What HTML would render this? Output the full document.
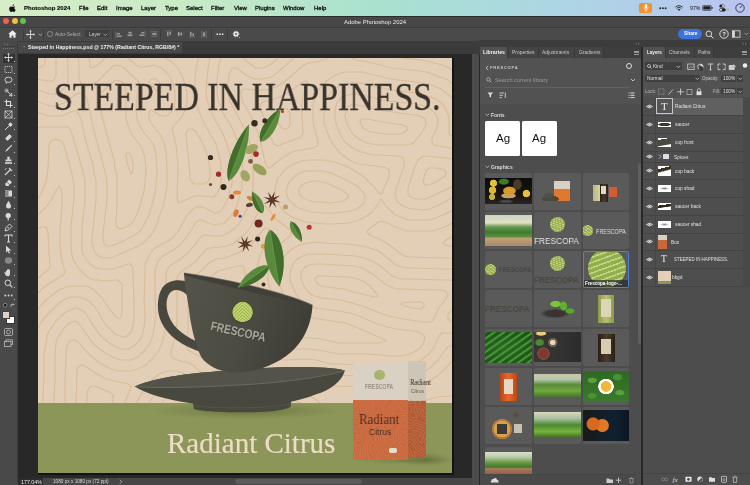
<!DOCTYPE html>
<html><head><meta charset="utf-8">
<style>
*{margin:0;padding:0;box-sizing:border-box}
html,body{width:750px;height:485px;overflow:hidden;background:#282828;font-family:"Liberation Sans",sans-serif}
.a{position:absolute}
.t{position:absolute;white-space:nowrap;line-height:1;will-change:transform}
#menubar{left:0;top:0;width:750px;height:16px;background:linear-gradient(90deg,#d6edc6 0%,#c8ebc6 25%,#a9e1cf 50%,#acd6e4 75%,#bac4f1 100%)}
#menubar .t{font-size:6px;color:#111;top:5.2px;-webkit-text-stroke:0.3px #111}
#titlebar{left:0;top:16px;width:750px;height:10.5px;background:#474747;border-top:0.6px solid #2c2c2c}
#opts{left:0;top:26.5px;width:750px;height:14px;background:#4a4a4a;border-top:0.8px solid #3a3a3a}
#tools{left:0;top:41px;width:17.5px;height:444px;background:#494949}
#tabbar{left:17.5px;top:41px;width:462px;height:12.5px;background:#3b3b3b}
#doctab{left:17.7px;top:41.8px;width:164.4px;height:11.2px;background:#484848}
#canvasbg{left:17.5px;top:53.5px;width:454px;height:424px;background:#282828}
#canvas{left:37.5px;top:57.5px;width:414.5px;height:415px;background:#e3cfb8;overflow:hidden;box-shadow:1px 1px 0 1px #131313}
#vscroll{left:471.5px;top:53.5px;width:7.5px;height:431.5px;background:#4b4b4b}
#status{left:17.5px;top:477.5px;width:454px;height:7.5px;background:#444}
#libpanel{left:480px;top:46.5px;width:161px;height:438.5px;background:#4d4d4d}
#layerpanel{left:643px;top:46.5px;width:107px;height:438.5px;background:#4d4d4d}
#rightstrip{left:479px;top:40px;width:271px;height:6.5px;background:#3c3c3c}
.sep{position:absolute;background:#3a3a3a}
.cell{position:absolute;width:46.6px;height:37px;background:#5a5a5a;border-radius:1.6px;overflow:hidden}
.cell>div{position:absolute}
</style></head><body>
<div id="menubar" class="a">
  <div class="t" style="left:8.5px;top:3.5px;font-size:9px"></div>
  <div class="t" style="left:23.7px;font-weight:bold;font-size:6px;color:#000;-webkit-text-stroke:0.1px #000">Photoshop 2024</div>
  <div class="t" style="left:78.7px">File</div>
  <div class="t" style="left:96.6px">Edit</div>
  <div class="t" style="left:116px">Image</div>
  <div class="t" style="left:141px">Layer</div>
  <div class="t" style="left:164.5px">Type</div>
  <div class="t" style="left:186.2px">Select</div>
  <div class="t" style="left:211.2px">Filter</div>
  <div class="t" style="left:234px">View</div>
  <div class="t" style="left:255.2px">Plugins</div>
  <div class="t" style="left:283.2px">Window</div>
  <div class="t" style="left:313.5px">Help</div>
</div>
<div id="titlebar" class="a"></div>
<div id="opts" class="a"></div>
<div id="tools" class="a"></div>
<div id="tabbar" class="a"></div>
<div id="doctab" class="a"></div>
<div id="canvasbg" class="a"></div>
<div id="canvas" class="a">
  <svg class="a" style="left:0;top:0" width="415" height="415" viewBox="0 0 415 415"><path d="M-30 231 -28 231 -25 228 -13 217 -3 208 -2 206 -1 204 -0 200 -0 195 -1 191 -2 189 -3 187 -4 187 -6 186 -8 186 -21 189 -30 189M-30 250 -28 249 -26 248 -16 235 -7 226 -1 221 10 212 12 209 12 206 11 193 10 175 9 171 8 169 6 169 4 169 -9 174 -17 177 -23 178 -30 178M-30 321 -29 318 -29 316 -28 295 -28 290 -26 279 -24 273 -22 267 -18 257 -15 252 -11 247 -5 240 1 234 6 229 12 225 25 217 26 216 27 214 27 212 26 210 24 202 23 198 22 190 22 171 24 150 24 141 24 135 23 130 22 129 21 129 20 130 18 133 13 142 9 148 3 154 -2 158 -8 162 -16 165 -23 167 -30 167M444 310 430 310 427 310 424 311 421 313 418 316 416 319 415 322 415 324 416 325 420 326 427 326 444 326M349 351 352 350 354 348 355 346 355 345 354 344 352 343 350 343 340 342 331 343 330 343 329 344 333 346 343 350 347 351 349 351M84 -30 87 -28 106 -17 110 -16 119 -15 125 -14 132 -11 143 -4 146 -3 147 -3 148 -4 149 -5 151 -8 156 -25 157 -30M166 126 168 125 170 124 171 122 172 119 172 115 172 111 171 105 170 99 168 93 166 88 164 84 161 79 158 74 156 72 154 71 152 71 150 72 149 73 148 75 148 77 150 95 151 106 152 118 152 121 154 124 155 125 156 126 160 126 166 126M-30 348 -24 348 -21 347 -19 346 -18 344 -17 339 -16 318 -15 292 -14 281 -13 275 -11 267 -6 259 -0 251 7 243 12 239 17 235 21 232 26 230 31 228 37 228 43 228 48 228 53 230 56 232 59 235 63 239 66 243 73 253 76 257 79 260 81 260 82 260 83 259 84 255 84 237 84 231 84 227 83 225 81 223 79 222 77 222 66 223 60 222 56 222 53 221 48 218 42 212 38 206 35 201 34 197 33 192 33 178 33 169 36 140 36 134 36 128 34 116 30 101 26 88 25 85 23 83 20 82 18 81 16 82 15 82 13 83 12 85 11 87 11 90 10 110 9 119 7 126 5 131 3 136 -0 141 -3 144 -6 147 -9 150 -13 152 -17 154 -22 155 -26 156 -30 156M444 298 423 298 420 299 418 299 415 302 409 309 404 314 400 317 396 320 390 324 384 326 378 328 371 330 363 330 351 330 324 329 297 328 290 327 276 325 270 324 265 324 259 325 256 326 254 327 254 328 255 329 257 330 264 333 272 338 277 341 286 348 291 351 295 352 304 354 328 358 335 360 347 364 352 365 355 364 357 363 367 353 373 349 381 345 389 342 399 339 413 338 421 338 444 338M62 -30 62 -24 62 -20 63 -17 65 -16 68 -15 78 -16 84 -15 87 -15 91 -13 95 -10 101 -6 104 -4 107 -4 117 -4 121 -3 124 -2 131 2 136 6 141 12 145 20 147 27 149 34 149 39 149 45 147 52 145 57 141 62 135 69 134 72 135 75 138 87 139 97 140 107 140 114 139 140 140 143 140 144 141 145 143 144 152 140 157 138 163 138 173 139 176 139 178 137 180 134 182 129 183 124 183 117 183 109 182 100 179 91 178 86 175 81 166 65 162 56 158 46 157 42 157 38 157 33 157 21 158 11 162 -6 164 -14 168 -25 169 -30M365 75 368 73 369 72 369 71 369 70 369 69 367 68 365 67 345 64 329 61 325 61 323 62 322 63 322 64 323 66 324 68 325 70 328 72 333 74 340 75 348 76 360 76 365 75M-30 359 -26 359 -22 360 -19 361 -12 365 -10 366 -9 366 -8 366 -7 364 -6 360 -6 354 -5 331 -5 316 -4 294 -3 284 -2 278 -1 274 0 270 4 263 12 254 20 246 24 243 27 241 30 240 33 239 36 239 40 239 44 240 47 241 52 244 56 248 59 252 66 264 69 268 72 271 75 274 79 277 82 278 85 279 87 279 89 278 91 276 93 274 94 271 95 267 96 261 96 256 96 245 95 215 95 211 94 208 93 207 92 206 90 206 87 207 78 210 73 211 67 211 61 211 56 209 52 206 48 201 45 196 44 193 44 189 44 177 44 170 47 141 47 133 47 126 46 118 44 110 35 79 33 73 32 71 31 70 29 69 27 69 15 69 4 69 2 69 -0 70 -1 72 -2 75 -1 90 -1 109 -2 118 -5 126 -6 130 -9 134 -11 137 -15 140 -18 142 -22 144 -26 145 -30 145M390 127 393 126 396 125 404 120 408 117 408 115 408 114 407 113 406 112 403 111 399 110 394 110 392 110 390 111 388 113 387 116 386 120 385 123 386 125 386 126 387 127 388 127 390 127M340 239 340 238 339 236 331 227 325 223 320 221 316 220 311 219 284 218 281 218 279 219 278 219 277 221 278 223 279 225 281 227 284 228 289 229 306 231 316 234 336 239 339 239 340 239M384 250 385 249 386 248 386 246 385 245 383 244 379 244 372 244 364 245 363 246 364 247 367 248 375 250 381 251 384 250M444 288 431 287 418 287 415 287 412 288 410 289 408 291 403 298 400 302 396 306 392 310 387 313 382 315 376 317 370 319 363 319 352 319 325 318 299 317 293 317 278 313 271 312 264 312 249 313 232 312 228 313 226 314 225 315 224 317 223 319 223 322 222 325 223 331 225 335 227 338 230 340 235 341 250 342 257 343 262 345 267 348 271 351 280 358 284 360 287 361 302 365 321 368 328 370 339 373 353 378 357 379 360 378 362 377 369 367 372 364 375 361 378 359 382 357 390 353 395 352 400 351 414 349 422 349 444 348M128 444 127 432 125 407 124 384 123 381 122 380 121 381 119 383 109 401 104 409 99 415 89 425 85 430 84 433 82 437 81 441 81 444M18 444 18 438 18 433 16 427 15 423 13 418 10 414 7 411 6 410 5 410 4 411 3 413 2 418 2 427 2 444M51 -30 51 0 52 6 52 8 53 9 54 10 55 10 58 8 61 6 68 -1 72 -3 76 -5 78 -5 81 -5 84 -4 88 -2 91 1 98 7 102 9 105 9 112 8 115 7 118 8 122 9 126 12 130 16 133 21 135 26 137 34 137 41 137 45 136 49 134 52 133 54 130 57 128 58 126 58 124 58 121 57 115 53 113 52 112 53 111 55 111 57 111 60 113 65 116 69 123 78 124 81 126 85 127 89 128 94 129 110 129 117 129 128 128 134 127 140 125 149 122 156 120 163 117 170 115 174 112 178 109 181 105 185 98 189 80 197 76 199 72 200 69 200 66 200 63 199 61 198 59 197 57 194 56 192 55 189 54 185 54 180 55 172 58 142 58 131 58 122 56 115 55 107 47 80 43 61 41 57 40 55 39 54 38 53 37 53 35 53 26 57 23 58 19 58 14 58 10 58 -2 54 -6 54 -8 54 -10 54 -12 56 -13 57 -14 58 -15 60 -15 64 -15 68 -12 82 -12 90 -12 106 -13 115 -14 119 -15 123 -17 126 -19 129 -22 131 -24 132 -27 133 -30 134M29 444 29 433 28 427 27 422 24 414 16 399 12 390 8 379 6 365 5 356 5 337 6 319 6 297 8 285 9 278 11 273 14 269 18 263 23 258 28 254 32 252 36 250 39 250 41 251 43 252 45 253 47 255 50 259 57 270 61 276 66 281 73 286 80 290 83 291 86 291 89 291 91 291 94 289 96 288 99 285 103 280 105 275 106 269 107 262 107 257 106 242 107 214 107 209 108 204 110 200 112 196 114 193 117 190 121 188 130 183 133 181 136 178 141 172 149 157 152 154 155 151 159 149 163 149 167 150 175 154 177 155 179 155 181 154 183 153 185 150 186 148 189 143 191 138 192 132 194 126 194 121 194 114 194 108 193 103 191 92 187 81 184 74 175 58 172 50 169 42 168 34 169 20 170 10 174 -9 179 -25 180 -30M201 -30 202 -26 203 -22 206 -17 210 -11 213 -7 217 -4 219 -3 222 -2 225 -2 229 -5 247 -20 252 -24 259 -28 262 -30M369 87 372 86 374 86 377 83 382 77 386 71 388 67 388 64 387 62 387 61 384 59 381 58 377 57 347 53 340 52 324 48 319 47 316 47 313 47 310 49 309 51 308 54 307 58 308 63 310 68 312 72 315 76 318 79 321 81 325 83 329 85 334 86 341 87 351 87 364 87 369 87M444 106 432 104 408 100 399 99 389 98 386 98 384 99 382 100 380 102 379 104 377 108 370 130 370 133 370 135 371 137 371 138 373 139 375 140 378 141 381 141 385 141 388 141 392 139 397 137 417 127 426 123 435 120 440 119 444 118M299 144 305 143 309 141 310 140 310 139 310 137 308 135 304 132 295 128 289 125 284 124 279 123 275 123 271 124 267 125 264 127 262 129 261 131 261 134 261 136 262 137 265 140 270 142 276 144 284 144 291 145 299 144M392 264 394 263 395 262 399 254 400 251 407 242 409 239 410 237 410 236 409 235 407 233 403 232 398 232 367 231 360 231 355 230 351 228 347 226 336 217 330 213 324 210 316 208 284 206 277 206 272 207 269 208 266 210 264 213 263 216 263 220 264 224 266 228 268 231 270 234 273 236 277 238 284 240 302 242 314 245 324 248 342 255 355 259 365 261 385 264 390 264 392 264M444 277 431 276 408 275 404 275 402 277 401 278 397 287 394 292 391 296 387 299 382 303 377 305 371 307 364 308 352 309 327 307 299 306 293 306 278 302 270 301 266 301 249 302 232 301 228 301 225 301 222 302 219 304 217 306 215 309 213 312 212 316 211 324 211 328 212 333 213 337 214 340 216 343 218 346 220 347 223 349 227 351 232 352 248 353 255 354 259 356 262 358 275 368 278 369 282 371 291 374 303 376 321 379 329 381 345 387 352 390 361 394 363 395 365 395 367 393 369 390 375 378 379 373 381 371 384 368 390 365 395 363 400 362 413 360 422 359 444 359M139 444 138 431 136 406 135 394 136 388 137 381 142 358 143 353 143 349 142 344 141 341 140 339 139 338 137 337 134 336 131 337 128 339 125 343 121 349 114 362 102 391 99 396 97 400 92 407 81 418 76 425 73 430 71 435 70 440 69 444M414 444 414 441 411 437 408 433 403 429 397 424 390 420 370 407 367 406 366 406 364 407 358 412 354 414 349 416 343 418 330 421 304 425 299 427 294 428 289 431 287 433 285 435 282 439 282 441 281 444M40 -30 41 15 41 19 42 22 43 25 45 27 47 28 49 28 52 28 55 26 58 24 61 22 73 10 76 8 79 7 82 8 86 10 99 22 101 24 101 25 102 27 99 35 99 41 98 52 99 60 101 66 104 72 107 76 113 83 116 88 117 92 118 96 119 111 119 116 118 126 117 136 113 150 111 157 108 163 105 169 102 173 97 177 91 180 79 186 73 188 71 188 69 188 67 187 66 185 65 181 65 176 68 150 69 142 69 127 68 118 65 106 56 73 50 45 49 42 48 39 46 37 44 36 41 35 37 37 34 39 26 45 23 46 20 47 17 48 13 48 9 47 -2 43 -6 43 -9 43 -13 43 -16 44 -19 46 -22 49 -24 52 -26 55 -27 58 -28 62 -27 66 -24 79 -22 88 -22 97 -22 106 -23 112 -25 117 -27 120 -28 120 -30 121M40 444 39 431 38 425 37 419 34 410 25 394 22 386 18 375 16 361 16 354 16 339 17 322 17 298 18 285 19 281 21 278 24 273 29 267 32 265 34 264 37 263 39 264 40 265 42 267 51 280 54 284 58 288 67 295 71 297 76 300 80 301 84 302 89 302 93 302 97 300 100 299 103 296 107 292 110 288 113 283 115 277 116 271 117 263 118 257 117 240 117 218 117 213 118 209 119 206 120 203 123 200 125 198 137 191 143 186 148 180 157 166 158 164 160 163 162 162 164 162 166 163 173 166 178 167 181 166 183 166 186 165 188 163 192 159 196 153 200 145 202 136 204 131 204 126 205 113 204 103 202 92 199 82 196 74 193 68 185 55 183 49 180 42 179 35 179 24 180 14 181 6 184 -3 185 -8 187 -12 189 -14 190 -15 191 -15 193 -15 196 -12 205 0 212 6 215 8 218 10 221 10 224 10 228 9 233 6 237 3 250 -9 254 -12 257 -14 260 -15 264 -17 276 -18 281 -21 284 -23 286 -25 287 -27 287 -30M123 35 122 35 120 34 112 26 111 24 112 23 113 21 115 21 117 21 119 22 121 24 123 27 124 30 124 33 123 35M444 95 435 94 424 92 401 88 397 87 395 86 394 85 394 84 394 82 394 80 398 73 399 69 400 65 400 61 398 57 395 53 391 50 386 48 378 46 359 44 349 43 324 37 316 36 310 37 307 38 304 39 302 41 300 43 299 45 298 48 297 53 297 59 298 65 300 71 302 76 304 80 307 84 312 88 315 90 319 92 323 94 328 95 334 97 341 97 360 98 364 99 365 100 366 101 366 104 366 108 363 117 358 131 357 136 358 140 359 143 362 146 365 148 370 150 376 151 385 152 392 151 396 149 401 147 421 136 428 133 437 130 444 129M296 155 306 154 313 153 319 151 323 148 326 145 327 142 327 140 327 138 326 136 325 134 322 131 319 128 314 125 308 122 293 115 288 114 283 113 278 113 272 113 268 113 264 114 260 116 257 118 254 121 251 124 250 127 249 130 248 133 249 137 250 140 252 143 255 146 257 148 261 150 264 151 273 154 287 155 296 155M444 266 433 266 418 265 414 264 412 263 411 262 410 261 410 259 410 257 411 255 414 251 424 241 426 238 426 235 426 233 426 231 424 228 421 225 417 224 412 222 406 222 371 221 365 221 359 220 355 218 352 216 341 207 334 203 327 200 318 198 286 196 275 196 270 196 265 198 261 200 258 202 255 206 253 211 252 216 252 222 255 230 258 236 262 241 267 245 272 248 278 250 285 251 300 253 312 255 321 258 337 265 349 269 359 271 376 273 381 274 384 276 386 277 386 278 387 280 386 283 385 286 383 289 379 292 376 294 372 296 367 297 362 298 354 298 330 296 302 296 296 295 280 292 270 291 249 291 234 291 228 290 221 291 216 293 213 295 210 297 208 300 206 302 204 305 203 308 201 315 201 324 201 332 203 340 204 344 206 347 209 352 211 354 214 357 219 359 226 361 232 362 245 363 251 364 254 366 257 367 269 377 273 379 277 381 281 382 287 384 300 386 317 389 325 391 333 394 340 397 344 399 346 401 346 402 346 403 345 405 341 407 338 408 327 411 305 414 299 416 292 418 285 421 279 425 276 428 274 431 272 434 271 437 271 440 271 444M149 444 148 427 146 404 146 396 146 390 147 383 151 366 153 358 153 351 153 345 152 340 151 336 149 333 147 330 145 328 142 326 139 325 135 324 132 324 129 325 127 326 124 328 120 332 115 339 109 348 105 357 93 385 89 393 86 397 84 400 75 408 72 412 68 417 65 422 62 428 60 433 59 439 59 444M426 444 425 440 424 437 422 433 419 429 413 423 407 418 399 413 386 405 382 402 381 400 380 398 380 396 380 393 381 390 383 386 385 382 387 380 391 377 397 374 401 373 406 372 419 370 426 370 444 370M29 -30 30 22 29 26 28 28 26 30 22 34 19 35 17 36 15 36 12 36 3 33 -2 32 -10 32 -14 32 -17 33 -20 34 -27 37 -30 38M160 444 159 426 157 403 157 397 158 385 162 368 163 361 164 354 164 348 164 341 162 334 159 328 156 323 152 319 147 316 142 314 137 313 131 313 126 314 121 316 116 320 112 324 108 329 105 334 100 342 93 357 82 382 78 389 74 394 64 404 55 415 53 417 51 417 50 417 48 414 34 387 31 378 28 367 27 355 27 339 27 324 28 301 28 293 29 288 31 284 33 282 35 282 37 282 40 284 46 291 51 296 60 304 65 307 71 310 76 312 81 313 86 313 91 313 96 312 100 311 104 309 108 307 112 303 115 300 120 294 123 288 125 281 127 274 128 265 128 258 128 251 128 239 128 221 128 215 129 212 130 210 132 208 133 207 144 200 150 195 155 189 161 181 164 178 166 177 168 177 177 178 180 178 183 178 186 177 190 175 193 173 196 171 201 166 205 159 210 149 213 139 215 131 215 124 215 107 214 98 212 86 208 74 203 64 194 48 192 44 191 39 190 32 190 24 191 17 193 12 194 10 195 10 196 10 198 10 200 11 209 18 212 19 216 21 220 21 224 21 228 20 231 20 235 18 240 14 256 0 262 -4 267 -6 276 -7 280 -8 284 -9 288 -12 293 -16 296 -20 298 -25 299 -30M85 170 82 171 80 170 79 169 78 167 78 162 79 148 79 141 79 126 79 117 77 110 76 102 66 66 62 49 61 42 62 38 63 36 64 34 74 25 77 23 79 22 82 23 84 24 86 26 87 29 88 33 88 54 88 59 89 64 91 70 94 77 98 82 103 89 105 93 106 96 107 100 108 112 107 124 106 133 103 144 100 154 97 160 94 165 90 168 85 170M444 84 436 83 422 81 416 79 414 78 412 77 411 75 411 73 411 65 411 60 410 56 408 52 406 48 402 44 398 41 393 39 387 37 381 35 360 33 349 31 322 25 314 25 307 26 301 28 298 30 295 32 291 37 287 43 286 49 286 57 286 65 289 73 292 81 296 88 303 96 306 98 310 101 315 104 321 106 330 107 345 109 348 110 350 111 351 112 351 114 351 116 351 119 347 128 344 135 343 136 342 136 341 135 335 128 328 121 322 116 314 111 305 107 296 104 287 102 279 102 270 102 263 103 256 106 250 109 247 112 244 115 240 120 239 123 238 127 237 133 237 136 238 140 239 143 241 147 243 150 246 153 249 156 252 158 259 161 267 164 275 165 288 166 295 166 310 165 318 163 325 160 330 157 334 154 338 149 342 142 343 141 344 142 348 148 352 152 356 156 360 158 365 160 370 162 375 162 382 162 391 162 398 160 407 156 425 147 431 144 438 142 444 141M444 255 440 255 437 254 435 254 433 252 433 251 434 249 437 240 438 235 438 230 437 227 436 224 434 221 430 218 425 215 420 213 413 211 407 211 374 210 369 210 364 209 361 208 358 207 347 198 343 195 338 192 334 191 329 189 324 188 318 187 306 186 286 185 277 184 271 185 265 186 259 188 254 191 249 195 245 200 244 203 242 207 241 210 241 214 241 221 242 225 243 230 246 238 251 245 253 248 256 251 260 254 264 256 268 258 272 259 281 261 300 264 307 265 313 267 320 270 343 280 347 282 348 283 346 284 341 285 307 285 300 285 283 281 272 280 266 280 251 280 233 280 222 280 218 281 215 281 211 283 207 286 204 288 200 292 197 295 195 298 192 305 191 313 190 323 190 332 192 341 194 349 198 356 203 362 206 364 210 367 214 369 219 371 227 373 242 374 245 374 248 375 252 377 262 385 269 389 277 393 292 397 297 399 298 400 298 401 298 402 296 403 283 410 277 413 272 416 268 420 264 426 262 431 260 437 260 444M437 444 437 439 435 434 433 429 429 424 422 417 416 411 397 398 394 395 394 392 395 389 397 387 400 385 405 383 412 382 422 381 444 381M18 -30 18 13 18 18 17 20 16 22 14 23 11 23 -2 21 -12 21 -18 22 -27 24 -30 25M444 73 438 72 432 71 428 70 425 68 424 66 423 64 422 56 420 51 418 47 416 43 412 38 407 34 403 31 398 29 392 26 385 25 353 21 324 14 316 14 308 14 303 15 298 17 294 19 290 22 285 26 282 30 279 34 277 39 276 43 275 47 275 52 275 58 275 63 276 68 280 83 280 86 279 88 277 89 275 90 263 92 258 93 254 94 249 97 245 99 233 109 231 110 230 110 229 109 228 107 227 104 223 86 220 74 217 68 215 62 206 46 204 42 203 37 203 35 203 33 204 32 206 31 217 32 223 32 229 32 235 30 240 28 246 24 251 20 261 11 266 7 268 6 271 5 279 4 284 2 288 1 292 -1 296 -4 299 -6 302 -10 305 -14 307 -18 309 -22 310 -26 310 -30M94 115 93 116 92 114 89 104 88 98 88 96 89 95 90 95 92 96 93 98 94 101 95 105 95 109 95 112 94 115M176 326 175 327 174 327 173 326 163 314 159 311 156 308 151 305 147 304 136 301 134 299 133 298 133 296 133 294 137 280 138 273 139 265 139 253 139 240 139 231 139 224 139 220 140 217 142 215 144 213 152 208 156 205 160 201 167 193 169 191 171 190 173 190 183 189 189 188 196 185 202 180 207 176 212 170 215 164 222 151 224 148 225 148 226 148 227 148 229 150 235 157 239 162 243 165 251 171 253 173 253 174 253 175 253 177 241 187 238 191 235 195 233 200 231 206 230 211 230 216 230 222 231 227 233 234 235 241 238 246 241 251 251 263 252 265 252 266 251 267 250 268 246 268 224 269 216 270 212 271 207 273 203 275 199 278 194 282 190 286 187 291 185 295 182 300 181 305 177 322 176 326M444 212 441 211 433 206 428 204 423 202 416 201 411 200 406 200 375 199 371 199 367 198 363 196 354 189 348 185 343 182 332 177 330 175 329 174 330 172 335 168 340 164 342 164 344 163 346 164 348 164 355 168 360 170 368 173 374 173 382 173 389 173 395 173 401 171 407 169 435 154 440 153 444 152M56 394 54 395 53 394 51 393 49 391 46 386 43 381 42 376 40 370 39 363 38 354 38 344 39 316 39 312 40 309 41 308 43 307 44 307 47 308 59 316 68 321 76 323 87 325 90 326 92 327 93 329 92 332 91 335 83 352 74 374 71 380 68 384 65 387 60 392 56 394M171 444 170 424 168 403 168 395 170 384 176 356 178 351 178 350 179 350 180 350 181 351 189 362 194 369 199 373 204 376 211 380 219 382 227 384 240 385 244 386 248 388 262 399 265 401 266 403 266 404 265 406 256 418 254 422 251 427 249 435 249 444M444 421 442 421 440 419 422 401 419 398 419 396 419 395 420 394 422 393 425 392 432 392 444 392M8 -30 7 0 7 5 5 8 3 9 1 9 -16 10 -27 12 -30 13M444 61 439 61 437 60 435 58 433 55 429 43 427 39 424 35 420 31 415 26 410 22 405 20 397 17 389 14 382 13 362 11 353 10 331 4 318 2 315 1 314 0 313 -1 313 -3 314 -6 318 -14 320 -19 321 -24 321 -30M242 87 240 88 238 87 236 86 235 84 233 80 229 67 223 52 222 49 222 47 223 46 225 44 236 41 244 38 252 33 265 24 267 23 269 23 269 24 269 25 265 38 264 47 264 60 265 73 265 75 264 77 263 79 261 80 242 87M444 198 440 197 432 194 427 192 408 187 406 186 405 185 406 184 408 182 418 176 436 166 440 164 444 164M169 299 167 300 165 300 162 298 155 295 150 292 149 290 148 288 148 284 150 272 150 264 150 252 150 233 150 228 151 224 152 222 154 220 163 213 171 205 174 203 178 201 187 200 192 198 197 196 202 194 208 190 214 185 218 180 225 172 227 171 228 170 230 171 231 172 233 174 233 175 233 177 232 179 226 188 223 196 220 205 219 209 219 214 219 221 220 228 222 236 227 250 227 252 227 254 226 255 225 256 223 257 212 259 205 262 198 265 192 269 186 275 180 281 176 287 171 297 169 299M59 375 57 376 56 376 54 374 53 373 52 370 51 366 49 356 49 344 49 335 50 332 51 330 52 329 54 328 56 328 59 329 71 334 74 336 75 337 75 339 75 342 74 345 65 366 62 372 60 374 59 375M182 444 181 424 179 403 179 397 180 390 182 384 183 381 185 380 186 380 189 380 201 387 209 391 215 393 222 394 235 396 238 396 242 398 244 400 246 402 248 405 248 408 247 411 242 420 240 426 238 435 238 444M444 43 443 43 441 41 433 29 426 21 422 17 418 14 414 12 409 9 401 6 392 4 383 2 364 0 355 -1 339 -5 336 -6 333 -8 331 -10 330 -12 330 -15 332 -24 332 -30M248 71 246 71 245 71 244 70 243 69 240 64 239 61 238 58 239 55 240 53 244 51 247 50 249 51 251 53 252 56 252 59 252 64 252 67 251 69 250 70 248 71M165 280 164 280 163 280 163 279 162 278 162 275 161 252 161 237 161 233 162 230 163 228 165 226 176 216 180 213 184 212 199 208 202 208 204 208 205 208 206 210 207 213 208 227 211 240 211 243 211 245 209 247 208 248 194 255 186 260 180 265 167 278 165 280M193 444 192 424 191 411 191 406 191 403 192 400 193 399 195 399 198 399 212 403 227 407 230 408 231 409 232 411 232 413 229 425 228 431 227 437 227 444M444 21 442 20 440 19 430 10 423 4 416 0 408 -3 400 -6 392 -8 383 -9 360 -12 353 -13 348 -15 345 -17 344 -19 343 -22 343 -30M178 250 176 250 175 249 174 248 173 246 172 242 172 239 173 236 174 234 176 232 180 228 183 225 185 224 187 223 190 223 192 223 194 224 195 224 196 226 198 231 198 236 197 239 195 241 192 243 182 249 178 250M205 444 204 426 204 420 204 418 205 417 206 416 207 416 209 415 212 416 215 417 216 418 217 420 217 424 215 435 215 444" fill="none" stroke="#d9bc98" stroke-width="1.15" stroke-linejoin="round"/></svg>
  <div class="a" style="left:0;top:345px;width:415px;height:70px;background:#8c9659"></div>
  <div class="t" style="left:16px;top:19.7px;font-family:'Liberation Serif',serif;font-size:39px;color:#38332c;-webkit-text-stroke:0.3px #38332c;transform:scaleX(0.868);transform-origin:0 0">STEEPED IN HAPPINESS.</div>
  <div class="t" style="left:129.5px;top:371.5px;font-family:'Liberation Serif',serif;font-size:29px;color:#eedcc8;-webkit-text-stroke:0.15px #eedcc8">Radiant Citrus</div>
  <svg class="a" style="left:0;top:0" width="415" height="415" viewBox="37.5 57.5 415 415">
    <defs>
      <linearGradient id="cupg" x1="0" y1="0" x2="1" y2="0.3"><stop offset="0" stop-color="#55544a"/><stop offset="0.6" stop-color="#4c4b42"/><stop offset="1" stop-color="#3f3e37"/></linearGradient>
      <radialGradient id="shd" cx="0.5" cy="0.5" r="0.5"><stop offset="0" stop-color="#5f6a38" stop-opacity="0.8"/><stop offset="1" stop-color="#6d7842" stop-opacity="0"/></radialGradient>
    </defs>
    <ellipse cx="245" cy="410" rx="95" ry="9" fill="url(#shd)"/>
    <ellipse cx="425" cy="459" rx="26" ry="7" fill="url(#shd)"/><ellipse cx="405" cy="460" rx="50" ry="4" fill="url(#shd)" opacity="0.6"/>
    <!-- saucer -->
    <path d="M134.2 386 C150 379 175 374 217 370.7 C260 367 320 364 344.3 370 C342 380 330 390 315 394 C305 398 295 400 290.6 401.3 L290.2 406 C285 410 270 411.5 245 411.8 C220 411.8 200 411 193.5 408.5 L192.5 403 C165 399 145 393 134.2 386Z" fill="#49483f"/>
    <path d="M134.2 386 C150 379 175 374 217 370.7 C260 367 320 364 344.3 370 C320 376 280 382 253.8 383.6 C200 387 160 388 134.2 386Z" fill="#54534a"/>
    <path d="M134.2 386 C160 388 200 387 253.8 383.6 C290 381 325 376 344.3 370" fill="none" stroke="#6d6c62" stroke-width="0.9"/>
    <path d="M193 405.5 C225 408.5 265 408 290.4 403.5" fill="none" stroke="#5a594f" stroke-width="0.7"/>
    <!-- handle -->
    <path d="M188 281.5 C180 278.5 168 278.5 162 287 C156 296 156 312 161 322 C167 335 182 346 203 352.5 L201 343 C186 337 173 328 168.5 316 C164.5 306 165.5 295 171 291 C176 288 183 290 188 296 C190 299 191 301 192 302 Z" fill="#49483f"/>
    <!-- cup body -->
    <path d="M183.4 272.4 L312 304.5 C311 326 301 345 285 356 C271 366 252 372.5 232 372 C218 371 207 365 201 357 C195 345 190 325 188.5 309 C186.5 295 184 282 183.4 272.4Z" fill="url(#cupg)"/>
    <path d="M183.4 272.4 C230 279 285 292 312 304.5 C282 299 232 288 184.5 275Z" fill="#403f38"/>
    <path d="M183.4 272.4 C230 279 285 292 312 304.5" fill="none" stroke="#65645a" stroke-width="0.6"/>
    <clipPath id="lc"><circle cx="242.1" cy="311.5" r="10.2"/></clipPath>
    <circle cx="242.1" cy="311.5" r="10.8" fill="#3a3a32"/>
    <circle cx="242.1" cy="311.5" r="10.2" fill="#9cb250"/>
    <path d="M230 312.0 L242 300.0 L254 312.0 M230 315.2 L242 303.2 L254 315.2 M230 318.4 L242 306.4 L254 318.4 M230 321.6 L242 309.6 L254 321.6 M230 324.8 L242 312.8 L254 324.8 M230 328.0 L242 316.0 L254 328.0 M230 331.2 L242 319.2 L254 331.2 " fill="none" stroke="#c8dc78" stroke-width="1.2" clip-path="url(#lc)"/>
    <text x="0" y="0" transform="translate(210 330) rotate(12.5)" font-family="Liberation Sans" font-weight="bold" font-size="12.5" fill="#2e2d27" textLength="56" lengthAdjust="spacingAndGlyphs" opacity="0.6">FRESCOPA</text><text x="0" y="0" transform="translate(209.5 329.3) rotate(12.5)" font-family="Liberation Sans" font-weight="bold" font-size="12.5" fill="#a9a69a" textLength="56" lengthAdjust="spacingAndGlyphs">FRESCOPA</text>
    <polygon points="280.1,202.0 273.7,201.1 275.7,207.3 271.8,202.2 268.8,207.9 269.7,201.5 263.5,203.5 268.6,199.6 262.9,196.6 269.3,197.5 267.3,191.3 271.2,196.4 274.2,190.7 273.3,197.1 279.5,195.1 274.4,199.0" fill="#5c3a27"/><polygon points="252.8,246.1 246.8,245.3 248.7,251.1 245.0,246.3 242.2,251.7 243.0,245.7 237.2,247.6 242.0,243.9 236.6,241.1 242.6,241.9 240.7,236.1 244.4,240.9 247.2,235.5 246.4,241.5 252.2,239.6 247.4,243.3" fill="#5c3a27"/><ellipse cx="236.5" cy="192" rx="4" ry="2" transform="rotate(0 236.5 192)" fill="#e08a3c"/><ellipse cx="251" cy="198.2" rx="5" ry="2" transform="rotate(20 251 198.2)" fill="#d8803a"/><ellipse cx="235.5" cy="212.7" rx="2.5" ry="4" transform="rotate(20 235.5 212.7)" fill="#e07a38"/><ellipse cx="272.6" cy="216.8" rx="4" ry="1.5" transform="rotate(-60 272.6 216.8)" fill="#e39040"/><ellipse cx="263.3" cy="245.7" rx="3" ry="2.5" transform="rotate(0 263.3 245.7)" fill="#d8a048"/><ellipse cx="248.9" cy="204.4" rx="3.5" ry="2" transform="rotate(-10 248.9 204.4)" fill="#5a4030"/><ellipse cx="231.3" cy="196.2" rx="2.5" ry="2.5" transform="rotate(0 231.3 196.2)" fill="#8a3a25"/><path d="M260.2 141.2C270.0 140.3 279.8 123.8 279.8 108.2C266.1 115.7 256.3 132.2 260.2 141.2Z" fill="#5a8a3c"/><path d="M260.2 141.2C256.3 132.2 266.1 115.7 279.8 108.2Z" fill="#426e2c"/><path d="M260.2 141.2L279.8 108.2" stroke="#86a864" stroke-width="0.5"/><path d="M228.2 180.4C239.4 174.9 249.5 146.7 248.5 124.0C233.3 140.8 223.1 169.0 228.2 180.4Z" fill="#5a8a3c"/><path d="M228.2 180.4C223.1 169.0 233.3 140.8 248.5 124.0Z" fill="#426e2c"/><path d="M228.2 180.4L248.5 124.0" stroke="#86a864" stroke-width="0.5"/><path d="M262.3 212.7C266.2 206.9 261.0 196.0 252.0 191.0C250.2 201.2 255.3 212.0 262.3 212.7Z" fill="#5a8a3c"/><path d="M262.3 212.7C255.3 212.0 250.2 201.2 252.0 191.0Z" fill="#426e2c"/><path d="M262.3 212.7L252.0 191.0" stroke="#86a864" stroke-width="0.5"/><path d="M269.5 229.2C259.1 239.6 263.7 268.0 278.8 285.9C287.4 264.1 282.7 235.8 269.5 229.2Z" fill="#5a8a3c"/><path d="M269.5 229.2C282.7 235.8 287.4 264.1 278.8 285.9Z" fill="#426e2c"/><path d="M269.5 229.2L278.8 285.9" stroke="#86a864" stroke-width="0.5"/><path d="M268.5 265.3C259.3 262.0 243.8 272.8 237.5 286.9C252.9 285.9 268.4 275.1 268.5 265.3Z" fill="#5a8a3c"/><path d="M268.5 265.3C268.4 275.1 252.9 285.9 237.5 286.9Z" fill="#426e2c"/><path d="M268.5 265.3L237.5 286.9" stroke="#86a864" stroke-width="0.5"/><path d="M290.1 220.9C287.1 226.5 292.8 236.8 301.4 241.5C302.1 231.7 296.5 221.4 290.1 220.9Z" fill="#5a8a3c"/><path d="M290.1 220.9C296.5 221.4 302.1 231.7 301.4 241.5Z" fill="#426e2c"/><path d="M290.1 220.9L301.4 241.5" stroke="#86a864" stroke-width="0.5"/><ellipse cx="251" cy="148.5" rx="7" ry="4.3" transform="rotate(-30 251 148.5)" fill="#a2a462"/><ellipse cx="259.2" cy="169" rx="8" ry="4.3" transform="rotate(35 259.2 169)" fill="#9a9e5a"/><ellipse cx="244.7" cy="175.3" rx="6" ry="4.3" transform="rotate(60 244.7 175.3)" fill="#a3a565"/><circle cx="254" cy="122.7" r="3.2" fill="#3a2b22"/><circle cx="264.3" cy="120.2" r="2.5" fill="#3a2b22"/><circle cx="255.5" cy="153.6" r="2.8" fill="#a52a2a"/><circle cx="223" cy="186.6" r="3" fill="#2f2620"/><circle cx="250" cy="160.8" r="2.4" fill="#7a5a45"/><circle cx="258.1" cy="223" r="4" fill="#6a2a20"/><circle cx="257.1" cy="238.5" r="2.5" fill="#2a2520"/><circle cx="285" cy="206.5" r="2.5" fill="#b8a070"/><circle cx="308.7" cy="226.7" r="2.5" fill="#c03030"/><circle cx="210" cy="157" r="2.6" fill="#3a2b22"/><circle cx="218" cy="173.7" r="2.6" fill="#a52a2a"/><circle cx="210" cy="184" r="1.6" fill="#8b3a25"/><circle cx="239.6" cy="215.8" r="1.5" fill="#304090"/><circle cx="263" cy="284" r="2" fill="#3a2b22"/><circle cx="282" cy="111" r="1.6" fill="#b04428"/>
  </svg>
  <!-- box -->
  <div class="a" style="left:315.4px;top:306.1px;width:55.1px;height:36px;background:#d9d2c4"></div>
  <div class="a" style="left:315.4px;top:342px;width:55.1px;height:60.5px;background:#c9683f"></div>
  <div class="a" style="left:370.5px;top:303.5px;width:17.5px;height:39.7px;background:#cdc5b6"></div>
  <div class="a" style="left:370.5px;top:343.2px;width:17.5px;height:57px;background:#b35b37"></div>
  <svg class="a" style="left:315.4px;top:342px;clip-path:polygon(0 0,73px 0,73px 58px,55.1px 58px,55.1px 60.5px,0 60.5px)" width="73" height="61" viewBox="0 0 73 61"><path d="M82.0 17.9 81.1 19.5 82.0 20.7M58.7 12.0 58.9 7.0 58.7 6.5 58.0 6.1 53.5 6.2 49.5 5.6 48.7 6.5 47.5 9.5 47.6 10.0 48.0 10.2 54.0 10.6 58.0 12.4 58.5 12.4 58.7 12.0M82.0 10.4 81.0 11.0 80.2 15.0 77.5 20.0 78.3 21.0 82.0 24.3M31.8 62.0 32.0 61.5 31.5 61.0 31.2 62.0 31.5 62.4 31.8 62.0M42.0 18.0 46.0 13.9 48.0 13.0 50.0 12.8 52.5 12.9 55.0 13.8 56.8 15.0 59.0 17.5 61.0 17.7 63.8 17.5 63.8 17.0 61.9 13.0 61.3 10.0 61.6 7.0 63.0 3.5 62.9 2.5 62.0 2.0 61.5 2.1 57.5 3.5 54.0 3.7 51.5 3.2 48.5 1.9 47.6 2.0 46.2 6.0 45.1 8.0 42.3 11.5 38.9 14.5 37.8 16.0 38.0 16.6 41.0 18.1 42.0 18.0M82.0 7.7 78.5 7.5 78.0 8.0 78.2 12.5 77.5 15.0 75.5 17.8 72.2 20.0 72.3 20.5 76.5 22.9 78.8 25.0 80.1 26.5 82.0 29.9M82.0 33.6 79.3 40.0 78.9 42.0 79.5 43.2 82.0 43.7M68.0 61.0 69.0 60.2 69.4 59.0 69.3 57.5 68.6 56.0 62.0 51.6 61.0 51.4 62.1 56.0 64.3 60.5 65.5 61.2 68.0 61.0M32.3 69.0 32.6 67.0 35.0 61.5 33.5 57.0 32.5 55.2 32.0 55.2 28.4 60.5 28.2 66.0 27.8 69.0M28.9 -7.5 29.0 -5.5 29.5 -4.5 30.0 -4.6 30.4 -5.5 30.6 -7.5M44.1 -7.5 44.7 -2.5 44.7 1.5 44.6 3.0 43.7 5.5 40.3 10.0 37.0 12.8 31.9 18.0 30.9 19.5 31.0 20.0 33.5 19.3 38.0 19.5 40.0 20.7 41.1 22.0 42.0 23.7 42.5 23.9 44.6 19.0 46.5 16.7 48.5 15.5 51.5 15.3 53.0 15.6 54.6 16.5 57.5 20.0 63.0 20.4 74.0 24.3 75.5 25.3 77.7 27.5 79.2 30.5 79.1 33.5 76.4 41.5 76.6 44.0 77.1 45.0 78.0 45.7 82.0 46.2M82.0 5.2 80.0 5.0 75.5 3.4 73.5 3.4 72.5 3.7 72.5 4.5 74.5 6.9 75.2 8.5 75.7 10.5 75.5 13.0 74.6 15.0 73.0 16.6 71.0 17.2 68.4 17.0 67.0 16.2 65.4 14.5 64.4 12.5 63.8 10.0 63.9 8.0 64.6 6.0 65.5 4.8 67.3 3.5 67.5 3.0 67.3 2.5 62.5 -1.3 61.5 -1.1 59.0 0.4 56.5 1.2 53.5 1.2 51.0 0.4 49.2 -1.0 47.8 -3.0 46.9 -5.0 46.7 -7.5M2.3 23.5 3.7 21.5 3.8 20.5 3.5 20.2 1.4 20.5 -0.1 21.5 0.1 22.5 1.0 23.5 1.5 23.8 2.3 23.5M37.7 39.5 40.0 38.9 41.0 38.0 40.7 31.5 40.5 30.7 40.0 30.3 35.0 32.1 34.0 33.0 34.3 34.5 36.0 38.9 36.5 39.5 37.7 39.5M68.6 63.5 70.6 62.5 71.8 60.0 72.0 58.0 70.9 54.5 64.5 50.3 61.8 47.5 58.6 43.0 57.5 42.0 56.5 42.1 53.5 44.0 52.9 45.0 56.9 49.5 58.0 51.8 60.0 57.5 62.8 63.0 64.0 63.9 68.6 63.5M11.4 69.0 8.8 62.0 7.6 56.0 7.6 48.0 6.9 45.5 6.0 44.5 5.4 45.0 4.9 47.0 6.4 53.0 6.4 56.0 5.8 58.5 5.7 61.5 7.1 66.5 7.3 69.0M34.8 69.0 35.3 67.0 37.4 63.0 37.6 61.0 35.4 55.0 33.6 48.5 33.0 47.8 32.5 47.9 31.5 49.1 29.0 54.8 26.0 59.5 25.3 69.0M26.3 -7.5 26.5 -4.5 27.8 -0.5 29.0 1.5 30.5 2.4 31.5 1.8 32.0 0.5 32.6 -2.0 33.2 -7.5M41.4 -7.5 42.3 -2.0 42.3 0.5 42.1 2.5 41.3 4.5 38.3 8.5 35.5 10.8 29.3 17.0 27.9 19.0 27.6 20.5 28.0 23.0 30.0 27.5 31.3 24.0 33.0 22.3 34.5 21.7 37.0 21.8 38.2 22.5 39.2 24.0 39.3 26.0 39.0 27.0 38.2 28.0 36.0 29.2 33.5 29.5 31.8 29.0 30.5 28.1 30.4 30.0 30.8 32.0 33.4 39.5 33.7 41.5 33.1 43.0 29.4 47.5 26.9 53.5 23.7 58.5 23.3 60.0 23.3 65.0 22.8 69.0M82.0 2.8 80.5 2.6 76.0 0.9 69.5 0.5 66.5 -1.3 63.6 -4.0 62.5 -4.4 61.5 -4.3 59.0 -2.4 56.5 -1.4 54.5 -1.2 53.0 -1.6 51.5 -2.3 50.4 -3.5 49.4 -5.5 49.2 -7.5M12.4 10.5 13.5 9.3 13.3 7.5 11.6 5.0 11.0 4.6 10.0 4.7 9.1 6.0 9.5 8.6 10.0 9.6 11.0 10.5 12.4 10.5M71.0 14.7 69.5 14.7 68.3 14.0 67.2 12.5 66.4 10.5 66.3 9.0 66.8 7.5 67.5 6.5 68.5 6.0 70.0 6.0 71.0 6.7 72.5 8.5 73.1 10.0 73.2 11.5 72.8 13.0 72.0 14.1 71.0 14.7M3.1 26.5 4.6 25.0 6.5 21.5 6.9 19.0 6.5 18.0 5.5 17.4 3.0 17.4 -0.6 18.5 -2.1 19.5 -3.0 21.0 -3.0 22.0 -2.4 23.5 -0.2 26.0 1.5 26.9 3.1 26.5M37.4 69.0 39.9 63.5 40.2 61.0 36.8 50.5 35.8 46.5 35.8 44.5 36.8 43.0 38.4 42.0 41.0 41.3 44.3 41.0 43.2 35.0 43.3 30.5 46.7 20.5 47.7 19.0 49.0 18.0 51.0 17.7 53.0 18.5 56.5 23.4 59.5 22.7 62.5 22.9 71.5 25.9 74.5 27.7 76.3 30.0 76.7 32.0 73.9 41.0 73.9 43.5 74.4 45.5 75.5 47.4 76.5 48.0 79.5 48.6 82.0 48.7M63.7 67.0 65.5 66.3 68.5 66.1 70.5 65.6 72.0 64.7 73.1 63.5 74.0 61.5 74.7 58.5 74.0 55.3 73.0 52.9 72.0 51.9 68.5 50.1 66.0 48.3 63.8 46.0 59.5 40.0 58.0 38.9 56.5 39.0 53.5 41.1 51.5 42.1 46.0 42.3 46.0 43.0 47.1 45.0 52.1 48.0 54.5 50.4 55.6 52.5 57.6 58.5 60.1 63.5 62.5 67.0 63.0 67.2 63.7 67.0M14.1 69.0 13.5 66.9 11.7 63.0 10.8 59.0 10.2 55.5 10.1 47.5 9.4 44.5 8.7 43.0 7.2 41.5 6.0 40.7 5.0 40.5 4.0 41.2 3.3 42.5 2.3 47.0 3.8 53.5 3.1 61.5 4.7 67.5 4.8 69.0M24.2 -7.5 24.3 -4.0 26.0 1.0 28.0 3.7 29.0 4.3 30.5 4.7 32.5 4.2 33.7 2.5 34.7 -1.0 35.3 -7.5M39.2 -7.5 40.2 -0.5 40.0 1.5 39.3 3.5 36.6 7.0 34.5 8.7 26.5 16.8 25.4 19.5 25.3 21.0 25.9 24.0 27.9 29.5 31.4 41.0 31.0 42.0 27.4 46.5 25.0 52.2 22.4 56.0 21.4 58.0 20.7 69.0M82.0 0.6 77.0 -1.2 70.4 -1.5 67.9 -3.0 64.5 -6.1 63.0 -6.8 61.0 -6.6 57.5 -4.2 55.5 -3.5 54.5 -3.5 52.5 -4.5 51.7 -6.0 51.3 -7.5M12.6 13.0 14.0 12.2 15.5 10.5 15.8 9.0 15.6 7.0 14.5 4.9 12.5 2.8 11.0 2.2 9.5 2.3 8.0 3.3 7.0 5.0 6.8 6.5 7.3 9.0 8.0 10.6 9.5 12.2 11.0 13.0 12.6 13.0M70.0 12.1 69.3 11.5 68.8 10.0 69.0 9.0 69.5 8.8 70.5 9.7 70.8 11.0 70.5 12.0 70.0 12.1M3.1 29.0 4.7 28.0 6.6 26.0 8.4 23.0 9.2 20.0 9.0 18.0 8.2 16.5 7.0 15.5 5.0 14.8 1.5 15.4 -2.5 16.9 -4.6 19.0 -5.3 21.0 -5.2 22.5 -4.4 24.5 -1.5 27.8 -0.5 28.6 1.0 29.2 3.1 29.0M73.5 49.7 70.3 48.5 67.5 46.7 65.5 44.6 61.2 38.5 58.5 36.5 57.5 36.3 56.0 36.7 52.5 39.1 50.5 40.0 48.0 40.0 46.5 39.1 46.0 38.0 45.4 34.5 45.4 31.5 48.4 22.0 49.5 20.4 50.5 20.0 51.7 20.5 54.4 25.0 55.5 26.0 57.0 26.0 60.0 24.9 61.5 25.0 70.6 28.0 72.5 28.9 73.7 30.0 74.3 31.0 74.5 32.0 72.3 38.0 71.7 41.5 71.8 44.5 73.7 49.5 73.5 49.7M35.5 27.0 33.5 27.0 33.0 26.2 33.5 24.9 35.0 23.9 36.5 24.1 37.0 25.0 36.9 26.0 35.5 27.0M16.3 69.0 15.8 66.5 13.6 61.5 13.0 58.5 12.3 54.5 12.3 47.0 11.2 43.0 10.5 41.8 8.0 39.3 6.5 38.5 5.0 38.2 3.5 38.5 2.1 40.0 1.1 42.0 0.2 45.5 0.3 49.0 1.7 54.5 0.8 61.5 2.7 69.0M39.8 69.0 42.1 64.0 42.3 60.0 40.0 53.5 38.0 45.5 39.0 44.2 42.0 43.4 43.5 43.9 45.5 46.7 51.0 49.9 52.5 51.4 53.6 53.5 55.6 59.5 60.7 69.0M-7.5 49.6 -6.0 48.7 -5.5 47.5 -6.0 45.9 -7.5 44.9M65.6 69.0 66.5 68.5 69.5 68.3 72.5 67.1 74.7 65.0 75.9 63.0 76.7 60.0 76.7 57.0 75.6 53.0 73.9 50.0 79.0 50.8 82.0 50.8M21.8 -7.5 21.9 -3.0 23.9 2.5 25.3 4.5 26.9 6.0 28.5 6.9 30.8 7.5 31.2 8.0 30.2 9.5 24.3 15.5 23.5 16.9 22.9 19.0 22.8 21.0 23.4 24.5 28.5 40.5 28.1 41.5 25.1 45.5 22.8 51.0 19.3 56.5 18.8 58.5 18.5 63.5 18.0 64.0 17.5 63.7 16.5 62.0 15.9 60.0 14.8 54.0 14.7 46.0 13.8 42.5 12.7 40.5 9.5 37.3 7.5 36.1 6.0 35.8 3.5 35.8 2.0 36.4 0.8 37.5 -0.6 39.5 -2.5 44.9 -3.0 45.2 -5.5 42.9 -7.5 42.3M57.3 -7.5 56.5 -6.6 55.5 -6.2 54.5 -6.5 53.9 -7.5M82.0 -2.1 77.5 -3.7 71.0 -4.1 68.8 -5.5 67.2 -7.5M-7.5 24.6 -5.7 27.0 -3.0 29.8 -0.5 31.4 1.0 31.7 3.0 31.7 6.0 30.2 8.6 27.5 10.9 23.5 11.7 20.0 11.5 16.5 11.8 16.0 15.5 14.2 17.9 11.5 18.2 10.0 18.2 7.0 16.9 4.0 14.8 1.5 13.0 0.1 10.0 -0.2 7.5 0.4 5.4 2.5 4.3 5.0 4.3 7.5 5.2 11.0 5.0 11.9 0.5 13.1 -3.3 14.5 -5.0 15.7 -7.5 18.4M68.5 43.6 67.5 42.9 62.8 36.5 61.0 35.0 59.0 34.0 56.0 34.0 54.0 34.9 50.5 37.3 49.5 37.5 48.5 37.0 47.8 34.0 47.9 32.0 48.8 29.0 50.5 25.0 51.0 24.8 53.3 27.5 55.0 28.5 57.0 28.6 60.0 27.5 61.0 27.5 69.5 30.3 71.0 31.1 71.6 32.0 71.5 33.0 69.9 37.0 69.3 39.5 69.1 43.0 68.5 43.6M42.6 69.0 44.6 64.5 44.7 60.0 44.4 58.0 41.5 49.5 41.1 47.5 41.5 46.6 42.0 46.7 44.5 49.1 49.0 51.7 50.5 53.0 53.3 60.5 57.6 69.0M-7.5 52.2 -5.5 51.6 -3.0 49.5 -2.5 49.6 -2.0 50.5 -1.0 54.5 -1.7 62.0 0.1 69.0M74.6 69.0 77.1 66.0 78.6 63.0 79.2 59.5 78.9 54.0 79.5 53.4 82.0 53.3M19.2 -7.5 19.4 -3.0 21.2 3.0 23.2 6.0 25.9 8.5 26.3 9.5 21.5 15.0 20.3 20.0 21.0 25.0 22.9 30.5 25.6 40.0 22.8 44.5 20.5 50.0 18.5 52.5 18.0 52.8 17.5 52.3 17.1 45.5 15.4 40.0 11.3 35.5 7.5 33.0 7.9 32.0 11.0 28.5 13.0 25.0 14.0 21.5 14.6 18.0 18.8 14.5 20.4 12.0 20.7 10.0 20.7 6.5 20.1 4.5 18.7 2.0 15.5 -1.2 13.5 -2.4 10.0 -2.7 7.0 -2.2 5.5 -1.2 4.0 0.2 2.3 3.0 1.8 5.0 2.0 9.0 1.6 10.0 -4.0 12.0 -7.5 14.3M82.0 -4.9 78.0 -6.1 72.5 -6.4 71.5 -6.8 70.9 -7.5M-7.5 29.2 -3.7 32.5 -0.6 34.5 -0.9 35.5 -4.0 40.2 -7.5 39.8M52.0 33.1 51.0 33.4 50.5 32.7 50.8 31.0 51.5 30.1 53.0 30.5 54.0 31.5 52.0 33.1M67.0 36.7 66.0 36.3 63.5 33.7 60.2 31.5 59.8 31.0 60.2 30.5 62.0 30.5 68.0 32.5 68.4 33.0 68.4 34.0 67.0 36.7M45.6 69.0 46.9 65.5 47.2 63.5 47.2 58.5 45.9 54.0 46.5 53.5 47.8 54.0 48.6 55.0 50.8 61.0 54.8 69.0M-7.5 54.7 -4.5 54.2 -3.9 54.5 -3.8 57.0 -4.2 62.0 -2.5 69.0M78.2 69.0 80.5 65.0 82.0 61.1M16.7 -7.5 16.6 -5.0 16.0 -4.4 12.5 -5.2 9.0 -5.2 6.5 -4.7 4.3 -3.5 1.7 -1.0 0.2 1.5 -0.5 3.5 -1.1 8.0 -7.5 10.9M20.0 43.5 19.3 43.0 17.1 38.0 12.3 33.0 11.8 32.0 14.8 27.0 17.0 21.7 17.5 21.9 18.0 23.4 22.7 39.0 22.3 40.5 20.0 43.5M-7.5 32.8 -5.3 34.5 -4.5 35.5 -4.8 36.5 -5.5 37.1 -7.5 37.3M-7.5 57.4 -6.7 58.0 -6.7 62.5 -5.2 69.0M48.5 69.0 49.2 67.0 50.0 66.1 51.0 67.2 51.8 69.0M5.8 -7.5 2.2 -5.0 -0.7 -2.0 -2.5 1.5 -3.5 6.0 -4.5 6.8 -7.5 8.0M18.0 34.5 16.5 33.5 15.3 32.0 15.5 31.0 16.5 29.8 17.0 29.9 17.5 30.5 18.0 31.7 18.4 33.5 18.0 34.5M0.8 -7.5 -3.5 -2.2 -4.8 0.5 -6.0 4.3 -7.5 5.2M-2.9 -7.5 -7.5 -0.4M-6.2 -7.5 -7.5 -5.9" fill="none" stroke="#d88a5e" stroke-width="0.5" opacity="0.8"/></svg>
  <div class="a" style="left:336.6px;top:312.3px;width:10.5px;height:10.5px;border-radius:50%;background:#a8b46e"></div>
  <div class="t" style="left:327.5px;top:326.5px;font-size:6.6px;color:#80776a;transform:scaleX(0.78);transform-origin:0 0">FRESCOPA</div>
  <div class="t" style="left:321px;top:355.5px;font-family:'Liberation Serif',serif;font-size:14px;color:#4d3026;transform:scaleX(0.92);transform-origin:0 0">Radiant</div>
  <div class="t" style="left:331.5px;top:370px;font-size:8.5px;color:#4d3026">Citrus</div>
  <div class="t" style="left:372.5px;top:320px;font-family:'Liberation Serif',serif;font-size:9px;color:#3d2a22;transform:scaleX(0.75);transform-origin:0 0">Radiant</div>
  <div class="t" style="left:373px;top:331px;font-size:5px;color:#6d5a4a">Citrus</div>
  <div class="a" style="left:351px;top:390.5px;width:8.5px;height:4.5px;border-radius:2px;background:#e6ddd0"></div>
</div>
<div id="vscroll" class="a"></div>
<div id="status" class="a"></div>
<div id="rightstrip" class="a"></div>
<div id="libpanel" class="a">
  <div class="a" style="left:0;top:11.5px;width:161px;height:45.8px;background:#525252"></div>
  <div class="a" style="left:0;top:0;width:161px;height:11.5px;background:#3e3e3e"></div>
  <div class="a" style="left:0.3px;top:0;width:27.2px;height:11.7px;background:#525252"></div>
  <div class="a" style="left:27.5px;top:0;width:30.5px;height:11.5px;background:#444;border-left:0.5px solid #383838"></div>
  <div class="a" style="left:58px;top:0;width:36.4px;height:11.5px;background:#444;border-left:0.5px solid #383838"></div>
  <div class="a" style="left:94.4px;top:0;width:30.1px;height:11.5px;background:#444;border-left:0.5px solid #383838;border-right:0.5px solid #383838"></div>
  <div class="t ui" style="left:3px;top:3.5px;font-weight:bold;color:#f0f0f0;font-size:5.2px">Libraries</div>
  <div class="t ui" style="left:31.6px;top:4.3px;color:#c8c8c8;font-size:4.95px">Properties</div>
  <div class="t ui" style="left:62.2px;top:4.3px;color:#c8c8c8;font-size:4.95px">Adjustments</div>
  <div class="t ui" style="left:98.9px;top:4.3px;color:#c8c8c8;font-size:4.95px">Gradients</div>
  <div class="a" style="left:154px;top:4px;width:5px;height:4px;border-top:1px solid #999;border-bottom:1px solid #999"></div>
  <div class="a" style="left:154px;top:5.5px;width:5px;height:1px;background:#999"></div>
  <svg class="a" style="left:4.5px;top:18.5px" width="4" height="6"><path d="M3.2 0.8L1 2.9L3.2 5" stroke="#ccc" stroke-width="0.9" fill="none"/></svg>
  <div class="t ui" style="left:10.4px;top:19px;color:#c8c8c8;font-size:4.1px;letter-spacing:0.75px;font-weight:bold">FRESCOPA</div>
  <div class="a" style="left:145.5px;top:16.5px;width:6px;height:6px;border-radius:50%;border:1px solid #ddd"></div>
  <svg class="a" style="left:6px;top:30.5px" width="6" height="6"><circle cx="2.4" cy="2.4" r="1.7" stroke="#bbb" stroke-width="0.8" fill="none"/><path d="M3.6 3.6L5.3 5.3" stroke="#bbb" stroke-width="0.9"/></svg>
  <div class="t ui" style="left:14.8px;top:31.2px;color:#9a9a9a;font-size:5.55px">Search current library</div>
  <svg class="a" style="left:150px;top:31px" width="6" height="4"><path d="M1 1 L3 3 L5 1" stroke="#ccc" stroke-width="0.9" fill="none"/></svg>
  <div class="a" style="left:5px;top:40px;width:145px;height:0.6px;background:#626262"></div>
  <svg class="a" style="left:7px;top:45.5px" width="7" height="6"><path d="M0.5 0.5 H6 L4 3 V5.5 L2.6 4.8 V3 Z" fill="#ddd"/></svg>
  <svg class="a" style="left:19px;top:45px" width="8" height="7"><path d="M0.5 1H5M0.5 3.3H4M0.5 5.6H3M6.3 0.5V6" stroke="#ccc" stroke-width="0.9" fill="none"/></svg>
  <svg class="a" style="left:147.5px;top:45.3px" width="7" height="7"><path d="M0.5 1H1.5M0.5 3.3H1.5M0.5 5.6H1.5M2.5 1H6.5M2.5 3.3H6.5M2.5 5.6H6.5" stroke="#ddd" stroke-width="1" fill="none"/></svg>
  <svg class="a" style="left:5px;top:66px" width="5" height="4"><path d="M0.5 0.8 L2.3 2.6 L4.1 0.8" stroke="#ccc" stroke-width="0.8" fill="none"/></svg>
  <div class="t ui" style="left:11px;top:66.5px;color:#ddd;font-size:5px;font-weight:bold">Fonts</div>
  <div class="a card" style="left:5px;top:74px;width:35px;height:35px;background:#fff;border-radius:1.5px"></div>
  <div class="a card" style="left:41.6px;top:74px;width:35px;height:35px;background:#fff;border-radius:1.5px"></div>
  <div class="t ui" style="left:15.5px;top:86px;color:#111;font-size:11.5px">Ag</div>
  <div class="t ui" style="left:52.1px;top:86px;color:#111;font-size:11.5px">Ag</div>
  <svg class="a" style="left:5px;top:118px" width="5" height="4"><path d="M0.5 0.8 L2.3 2.6 L4.1 0.8" stroke="#ccc" stroke-width="0.8" fill="none"/></svg>
  <div class="t ui" style="left:11px;top:118.9px;color:#ddd;font-size:5px;font-weight:bold">Graphics</div>
  <div class="a" style="left:157.5px;top:116px;width:3px;height:181px;background:#5f5f5f;border-radius:1.5px"></div>
  <div class="cell" style="left:5px;top:126.5px"><div style="left:0px;top:5px;width:46.6px;height:26.3px;background:radial-gradient(circle at 18% 20%,#e8c030 0 3.3px,transparent 3.9px),radial-gradient(circle at 16% 47%,#e0b828 0 3.4px,transparent 4px),radial-gradient(circle at 15% 73%,#c8b040 0 2.8px,transparent 3.4px),radial-gradient(circle at 88% 60%,#e8c038 0 3.4px,transparent 4px),radial-gradient(ellipse 7px 4.5px at 52% 49%,#d89a28 0 80%,transparent 100%),radial-gradient(ellipse 8px 3px at 50% 68%,#c8a070 0 80%,transparent 100%),radial-gradient(ellipse 6px 3.5px at 40% 14%,#3f7a28 0 70%,transparent 100%),radial-gradient(ellipse 5px 6px at 69% 25%,#4a3a28 0 70%,transparent 100%),radial-gradient(ellipse 8px 2px at 45% 90%,#44444a 0 60%,transparent 100%),linear-gradient(#0c0c0c,#1a1510 70%,#2a2420)"></div></div>
<div class="cell" style="left:54.1px;top:126.5px"><div style="left:20px;top:7.8px;width:16px;height:20.4px;background:linear-gradient(#d8d0c2 0 38%,#e07830 38%)"></div><div style="left:6.8px;top:22px;width:19.2px;height:6px;background:radial-gradient(ellipse at 50% 70%,#4a4a40 0 60%,transparent 62%)"></div><div style="left:10px;top:20px;width:10px;height:5px;background:radial-gradient(ellipse,#505046 0 65%,transparent 68%)"></div></div>
<div class="cell" style="left:102.7px;top:126.5px"><div style="left:10px;top:12px;width:7px;height:16px;background:linear-gradient(90deg,#b8b880,#d8d0a0)"></div><div style="left:17.5px;top:10.5px;width:8px;height:18px;background:linear-gradient(90deg,#2a2018,#4a3a28 50%,#2a2018)"></div><div style="left:26px;top:14px;width:8.5px;height:10px;background:#d85a30"></div><div style="left:18.8px;top:13px;width:5px;height:8px;background:#e0d8c0"></div></div>
<div class="cell" style="left:5px;top:165.5px"><div style="left:0px;top:3px;width:46.6px;height:31px;background:linear-gradient(#c8d4c0 0,#e0e2c8 25%,#6a9a50 38%,#3e7a30 55%,#5a9038 70%,#c0a078 75%,#a88a68 100%)"></div></div>
<div class="cell" style="left:54.1px;top:165.5px"><div style="left:15.899999999999999px;top:4.800000000000001px;width:15.0px;height:15.0px;border-radius:50%;background:repeating-linear-gradient(160deg,#9bb152 0 1.35px,#c4d38a 1.35px 1.95px)"></div><div class="t" style="left:0px;top:24.8px;font-size:9.2px;color:#e2e2e2;transform:scaleX(0.9);transform-origin:0 0">FRESCOPA</div></div>
<div class="cell" style="left:102.7px;top:165.5px"><div style="left:-0.2999999999999998px;top:13.099999999999998px;width:10.6px;height:10.6px;border-radius:50%;background:repeating-linear-gradient(160deg,#9bb152 0 0.95px,#c4d38a 0.95px 1.38px)"></div><div class="t" style="left:13px;top:15.5px;font-size:7.2px;color:#dedede;transform:scaleX(0.76);transform-origin:0 0">FRESCOPA</div></div>
<div class="cell" style="left:5px;top:204.5px"><div style="left:0.0px;top:13.0px;width:10.6px;height:10.6px;border-radius:50%;background:repeating-linear-gradient(160deg,#9bb152 0 0.95px,#c4d38a 0.95px 1.38px)"></div><div class="t" style="left:13.5px;top:15.3px;font-size:7.4px;color:#4a4740;font-weight:bold;transform:scaleX(0.8);transform-origin:0 0">FRESCOPA</div></div>
<div class="cell" style="left:54.1px;top:204.5px"><div style="left:15.899999999999999px;top:4.699999999999999px;width:15.0px;height:15.0px;border-radius:50%;background:repeating-linear-gradient(160deg,#9bb152 0 1.35px,#c4d38a 1.35px 1.95px)"></div><div class="t" style="left:0px;top:24.3px;font-size:9.4px;color:#4a4740;font-weight:bold;transform:scaleX(0.87);transform-origin:0 0">FRESCOPA</div></div>
<div class="cell" style="left:102.7px;top:204.5px;border:1px solid #4f80d8"><div style="left:4.199999999999999px;top:-2.6999999999999993px;width:38px;height:38px;border-radius:50%;background:repeating-linear-gradient(160deg,#92b04a 0 3.42px,#c4d38a 3.42px 4.94px)"></div><div style="left:0px;top:27.5px;width:46.6px;height:9.2px;background:rgba(40,40,40,0.7)"></div><div class="t" style="left:1.5px;top:29.5px;font-size:4.6px;color:#fff;font-weight:bold">Frescopa-logo-...</div></div>
<div class="cell" style="left:5px;top:243.5px"><div class="t" style="left:0px;top:14.3px;font-size:9.4px;color:#4a4740;font-weight:bold;transform:scaleX(0.87);transform-origin:0 0">FRESCOPA</div></div>
<div class="cell" style="left:54.1px;top:243.5px"><div style="left:6px;top:15px;width:30px;height:13px;background:radial-gradient(ellipse 15px 5px at 50% 65%,#3a3430 0 60%,transparent 100%)"></div><div style="left:12px;top:8px;width:32px;height:20px;background:radial-gradient(ellipse 6px 3.5px at 30% 30%,#78c838 0 75%,transparent 100%),radial-gradient(ellipse 4px 5px at 55% 40%,#60b030 0 75%,transparent 100%),radial-gradient(ellipse 5px 3px at 75% 65%,#58a828 0 75%,transparent 100%)"></div></div>
<div class="cell" style="left:102.7px;top:243.5px"><div style="left:15px;top:4.8px;width:16.3px;height:28.4px;background:linear-gradient(90deg,#8a9a48,#b8c070 50%,#8a9a48)"></div><div style="left:18px;top:9px;width:10px;height:18px;background:#ddd5b8"></div></div>
<div class="cell" style="left:5px;top:282.5px"><div style="left:0px;top:2.8px;width:46.6px;height:31.5px;background:repeating-linear-gradient(-35deg,transparent 0 1.2px,#449236 2px 3.4px,transparent 4.2px 5.5px),radial-gradient(ellipse at 40% 50%,#2a6a22,#1e5018 90%)"></div></div>
<div class="cell" style="left:54.1px;top:282.5px"><div style="left:0px;top:2.5px;width:46.6px;height:30.8px;background:radial-gradient(circle at 20% 72%,#8a3528 0 4.5px,#6a5048 5px 6px,transparent 6.5px),radial-gradient(circle at 40% 35%,#e8d8b0 0 2.5px,#6a6058 3px 4.5px,transparent 5px),radial-gradient(ellipse 5px 4px at 12% 35%,#4a8a30 0 70%,transparent 100%),radial-gradient(ellipse 6px 2.5px at 15% 5%,#e8d080 0 70%,transparent 100%),linear-gradient(90deg,#3a3530,#333 45%,#2c2c2c)"></div></div>
<div class="cell" style="left:102.7px;top:282.5px"><div style="left:15px;top:5px;width:17px;height:28px;background:linear-gradient(90deg,#2a2018,#4a3a28 50%,#2a2018)"></div><div style="left:18px;top:10px;width:10px;height:15px;background:#d8ccb0"></div></div>
<div class="cell" style="left:5px;top:321.5px"><div style="left:15.4px;top:5.3px;width:16.7px;height:27.4px;background:linear-gradient(90deg,#b84818,#e8682c 50%,#b84818)"></div><div style="left:18.5px;top:11px;width:9.5px;height:15px;background:#e8d8c0"></div></div>
<div class="cell" style="left:54.1px;top:321.5px"><div style="left:0px;top:6.3px;width:46.6px;height:24px;background:linear-gradient(#c8c8a8 0,#b8c8b0 22%,#5a8a38 45%,#70a840 70%,#406a28 100%)"></div></div>
<div class="cell" style="left:102.7px;top:321.5px"><div style="left:0px;top:2.7px;width:46.6px;height:31.6px;background:radial-gradient(circle at 50% 50%,#f0b838 0 5px,#f8f8f0 5.5px 7.5px,transparent 8px),radial-gradient(ellipse at 20% 30%,#5aa040 0 4px,transparent 5px),radial-gradient(ellipse at 80% 70%,#5aa040 0 4px,transparent 5px),radial-gradient(ellipse at 75% 20%,#4a9035 0 4px,transparent 5px),radial-gradient(ellipse at 20% 80%,#4a9035 0 4px,transparent 5px),linear-gradient(#2f6a24,#3a7a2c)"></div></div>
<div class="cell" style="left:5px;top:360.7px"><div style="left:6.6px;top:11.4px;width:20px;height:20px;background:radial-gradient(circle,#d8a050 0 8px,#b87a38 8.5px 10px,transparent 10.2px)"></div><div style="left:11.5px;top:16.5px;width:10px;height:10px;background:#3a3a36"></div><div style="left:29px;top:17px;width:8px;height:9px;background:#c8c0b0"></div><div style="left:27px;top:4px;width:8px;height:8px;background:radial-gradient(circle,#5a5030 0 2px,transparent 3px)"></div></div>
<div class="cell" style="left:54.1px;top:360.7px"><div style="left:0px;top:5.2px;width:46.6px;height:26px;background:linear-gradient(#d8d8b8 0,#a8c0a0 25%,#4a8a30 50%,#7ab040 75%,#3a6a20 100%)"></div></div>
<div class="cell" style="left:102.7px;top:360.7px"><div style="left:0px;top:3.1px;width:46.6px;height:30.6px;background:radial-gradient(circle at 22% 45%,#d86a20 0 6px,transparent 7px),radial-gradient(circle at 42% 50%,#e07828 0 6px,transparent 7px),linear-gradient(90deg,#1a1a1a,#102030 70%,#0c1620)"></div></div>
<div class="cell" style="left:5px;top:400px"><div style="left:0px;top:5px;width:46.6px;height:23px;background:linear-gradient(#dce0cc 0,#b8cca8 22%,#6a9a48 45%,#3e7a2a 66%,#a87858 72%,#8a6040 100%)"></div></div>
  <div class="a" style="left:0;top:427.7px;width:157px;height:11px;background:#4a4a4a;border-top:0.6px solid #454545"></div>
  <svg class="a" style="left:10px;top:430px" width="9" height="6"><path d="M1 5.5 H8 C9 5.5 9 3 7 3 C7 1 4.5 0 3.5 2 C2 1.5 1 3 1.5 4 C0.5 4 0.5 5.5 1 5.5Z" fill="#ddd"/></svg>
  <svg class="a" style="left:126px;top:430.5px" width="32" height="7"><path d="M0.5 1.5H3L4 2.5H7V6H0.5Z" fill="#ccc"/><path d="M12.5 0.5V6M9.8 3.2H15.2" stroke="#ccc" stroke-width="0.9"/><path d="M23 1.5H28M24 1.5V6H27V1.5M25 0.5H26" stroke="#999" stroke-width="0.8" fill="none"/></svg>
</div>
<div id="layerpanel" class="a"><div class="a" style="left:0px;top:0px;width:107px;height:11.7px;background:#3e3e3e"></div>
<div class="a" style="left:0px;top:0px;width:22.2px;height:11.9px;background:#525252"></div>
<div class="a" style="left:22.2px;top:0px;width:28.8px;height:11.7px;background:#444;border-left:0.5px solid #383838"></div>
<div class="a" style="left:51px;top:0px;width:20px;height:11.7px;background:#444;border-left:0.5px solid #383838;border-right:0.5px solid #383838"></div>
<div class="t" style="left:3.8px;top:4.8px;font-size:4.6px;color:#f0f0f0;font-weight:bold">Layers</div>
<div class="t" style="left:26.2px;top:4.8px;font-size:4.9px;color:#c8c8c8;">Channels</div>
<div class="t" style="left:55px;top:4.8px;font-size:4.9px;color:#c8c8c8;">Paths</div>
<div class="a" style="left:99px;top:4px;width:5px;height:4px;border-top:1px solid #999;border-bottom:1px solid #999"></div>
<div class="a" style="left:99px;top:5.5px;width:5px;height:1px;background:#999"></div>
<div class="a" style="left:0px;top:11.7px;width:107px;height:38.8px;background:#525252"></div>
<div class="a" style="left:2.2px;top:15.9px;width:36.8px;height:8px;background:#3f3f3f;border-radius:1px"></div>
<svg class="a" style="left:4px;top:17.5px" width="5" height="5"><circle cx="2" cy="2" r="1.5" stroke="#ddd" stroke-width="0.7" fill="none"/><path d="M3 3L4.6 4.6" stroke="#ddd" stroke-width="0.8"/></svg>
<div class="t" style="left:10.2px;top:18.8px;font-size:4.8px;color:#e0e0e0;">Kind</div>
<svg class="a" style="left:32.5px;top:18.8px" width="5" height="4"><path d="M0.5 0.8L2.3 2.6L4.1 0.8" stroke="#ccc" stroke-width="0.8" fill="none"/></svg>
<svg class="a" style="left:44px;top:16px" width="64" height="8"><rect x="0.7" y="1" width="6.4" height="5.4" stroke="#ccc" stroke-width="0.8" fill="none"/><path d="M1.5 5.5L3.5 3.5L5 4.5L6.5 3.5" stroke="#ccc" stroke-width="0.6" fill="none"/><circle cx="13.4" cy="3.8" r="2.7" fill="none" stroke="#ddd" stroke-width="0.8"/><path d="M13.4 1.1A2.7 2.7 0 0 1 13.4 6.5Z" fill="#ddd"/><path d="M20.8 1H26.2M23.5 1V6.8M22.3 6.8H24.7" stroke="#ccc" stroke-width="0.9" fill="none"/><path d="M31 1H33.5M31 1V3.5M38.2 1H35.7M38.2 1V3.5M31 6.6H33.5M31 6.6V4.2M38.2 6.6H35.7M38.2 6.6V4.2" stroke="#ccc" stroke-width="0.9" fill="none"/><rect x="41.7" y="2" width="6" height="5" rx="0.8" fill="#ccc"/><path d="M46 2A2 2 0 0 1 48.5 4" stroke="#ccc" stroke-width="0.8" fill="none"/><circle cx="58" cy="2.5" r="2.3" fill="#eee"/></svg>
<div class="a" style="left:55.8px;top:19px;width:4.6px;height:5px;background:#3a3a3a;border-radius:2px"></div>
<div class="a" style="left:2.2px;top:28.4px;width:55.2px;height:7px;background:#3f3f3f;border-radius:1px"></div>
<div class="t" style="left:4.3px;top:30.6px;font-size:4.8px;color:#e0e0e0;">Normal</div>
<svg class="a" style="left:51.5px;top:30.6px" width="5" height="4"><path d="M0.5 0.8L2.3 2.6L4.1 0.8" stroke="#ccc" stroke-width="0.8" fill="none"/></svg>
<div class="t" style="left:59.3px;top:30.6px;font-size:4.5px;color:#c8c8c8;">Opacity:</div>
<div class="a" style="left:77.9px;top:28.4px;width:14.7px;height:7px;background:#3f3f3f;border-radius:1px"></div>
<div class="t" style="left:79.5px;top:30.6px;font-size:4.8px;color:#e0e0e0;">100%</div>
<div class="a" style="left:94.2px;top:28.4px;width:5.6px;height:7px;background:#3f3f3f;border-radius:1px"></div>
<svg class="a" style="left:94.5px;top:30.6px" width="5" height="4"><path d="M0.5 0.8L2.3 2.6L4.1 0.8" stroke="#ccc" stroke-width="0.8" fill="none"/></svg>
<div class="t" style="left:2.2px;top:43.5px;font-size:4.6px;color:#b8b8b8;">Lock:</div>
<svg class="a" style="left:15px;top:41px" width="50" height="8"><rect x="0.5" y="0.8" width="5.5" height="5.5" stroke="#aaa" stroke-width="0.6" fill="none" stroke-dasharray="1 0.6"/><path d="M10.5 6.5L15 1.5" stroke="#bbb" stroke-width="1"/><path d="M22.5 0.5V7M19.3 3.8H25.8" stroke="#ccc" stroke-width="0.9"/><path d="M29 1.5H34V6.5H29Z" stroke="#bbb" stroke-width="0.7" fill="none"/><rect x="38.5" y="3.3" width="5" height="3.8" fill="#ddd"/><path d="M39.5 3.3V2A1.5 1.5 0 0 1 42.5 2V3.3" stroke="#ddd" stroke-width="0.7" fill="none"/></svg>
<div class="t" style="left:69.9px;top:43.5px;font-size:4.6px;color:#b8b8b8;">Fill:</div>
<div class="a" style="left:77.9px;top:41.2px;width:14.7px;height:6.4px;background:#3f3f3f;border-radius:1px"></div>
<div class="t" style="left:79.5px;top:43.4px;font-size:4.8px;color:#e0e0e0;">100%</div>
<div class="a" style="left:94.2px;top:41.2px;width:5.6px;height:6.4px;background:#3f3f3f;border-radius:1px"></div>
<svg class="a" style="left:94.5px;top:43px" width="5" height="4"><path d="M0.5 0.8L2.3 2.6L4.1 0.8" stroke="#ccc" stroke-width="0.8" fill="none"/></svg>
<div class="a" style="left:0px;top:50.5px;width:100px;height:190px;background:#4e4e4e"></div>
<div class="a" style="left:12.3px;top:51.099999999999994px;width:87.8px;height:17.6px;background:#606060"></div>
<div class="a" style="left:0px;top:68.39999999999999px;width:100px;height:0.6px;background:#434343"></div>
<svg class="a" style="left:3px;top:57.4px" width="7" height="5"><path d="M0.5 2.5Q3.5 -0.5 6.5 2.5Q3.5 5.5 0.5 2.5Z" fill="none" stroke="#e8e8e8" stroke-width="0.8"/><circle cx="3.5" cy="2.5" r="1" fill="#e8e8e8"/></svg>
<div class="a" style="left:13.4px;top:51.699999999999996px;width:16.5px;height:16.3px;border:1px solid #c8c8c8;background:#555"></div>
<div class="t" style="left:17.5px;top:54.6px;font-family:'Liberation Serif',serif;font-size:11px;color:#eee">T</div>
<div class="t" style="left:31.8px;top:58.7px;font-size:4.8px;color:#e0e0e0;">Radiant Citrus</div>
<div class="a" style="left:0px;top:86.49999999999999px;width:100px;height:0.6px;background:#434343"></div>
<svg class="a" style="left:3px;top:75.2px" width="7" height="5"><path d="M0.5 2.5Q3.5 -0.5 6.5 2.5Q3.5 5.5 0.5 2.5Z" fill="none" stroke="#e8e8e8" stroke-width="0.8"/><circle cx="3.5" cy="2.5" r="1" fill="#e8e8e8"/></svg>
<div class="a" style="left:14.6px;top:75.49999999999999px;width:13.5px;height:4.5px;background:radial-gradient(ellipse 7px 1.6px at 50% 50%,#3a3a30 0 80%,#fff 100%)"></div>
<div class="t" style="left:31.8px;top:76.5px;font-size:4.8px;color:#e0e0e0;">saucer</div>
<div class="a" style="left:0px;top:104.49999999999999px;width:100px;height:0.6px;background:#434343"></div>
<svg class="a" style="left:3px;top:93.3px" width="7" height="5"><path d="M0.5 2.5Q3.5 -0.5 6.5 2.5Q3.5 5.5 0.5 2.5Z" fill="none" stroke="#e8e8e8" stroke-width="0.8"/><circle cx="3.5" cy="2.5" r="1" fill="#e8e8e8"/></svg>
<div class="a" style="left:14.6px;top:91.04999999999998px;width:13.5px;height:9.5px;background:linear-gradient(170deg,#fff 0 18%,#4a4a40 18% 70%,#fff 78%)"></div>
<div class="t" style="left:31.8px;top:94.6px;font-size:4.8px;color:#e0e0e0;">cup front</div>
<div class="a" style="left:0px;top:115.39999999999999px;width:100px;height:0.6px;background:#434343"></div>
<svg class="a" style="left:3px;top:107.7px" width="7" height="5"><path d="M0.5 2.5Q3.5 -0.5 6.5 2.5Q3.5 5.5 0.5 2.5Z" fill="none" stroke="#e8e8e8" stroke-width="0.8"/><circle cx="3.5" cy="2.5" r="1" fill="#e8e8e8"/></svg>
<svg class="a" style="left:15px;top:107.7px" width="5" height="5"><path d="M1 0.5L3 2.5L1 4.5" stroke="#ccc" stroke-width="0.7" fill="none"/></svg>
<div class="a" style="left:19.5px;top:107.64999999999999px;width:6.5px;height:5px;background:#ddd;border-radius:0.5px"></div>
<div class="t" style="left:30.8px;top:109.0px;font-size:4.8px;color:#e0e0e0;">Spices</div>
<div class="a" style="left:0px;top:132.7px;width:100px;height:0.6px;background:#434343"></div>
<svg class="a" style="left:3px;top:121.8px" width="7" height="5"><path d="M0.5 2.5Q3.5 -0.5 6.5 2.5Q3.5 5.5 0.5 2.5Z" fill="none" stroke="#e8e8e8" stroke-width="0.8"/><circle cx="3.5" cy="2.5" r="1" fill="#e8e8e8"/></svg>
<div class="a" style="left:14.6px;top:119.6px;width:13.5px;height:9.5px;background:linear-gradient(165deg,#fff 0 25%,#3a3020 25% 45%,#fff 55%)"></div>
<div class="t" style="left:31.8px;top:123.1px;font-size:4.8px;color:#e0e0e0;">cup back</div>
<div class="a" style="left:0px;top:150.39999999999998px;width:100px;height:0.6px;background:#434343"></div>
<svg class="a" style="left:3px;top:139.3px" width="7" height="5"><path d="M0.5 2.5Q3.5 -0.5 6.5 2.5Q3.5 5.5 0.5 2.5Z" fill="none" stroke="#e8e8e8" stroke-width="0.8"/><circle cx="3.5" cy="2.5" r="1" fill="#e8e8e8"/></svg>
<div class="a" style="left:14.6px;top:138.35px;width:13.5px;height:7px;background:radial-gradient(ellipse 5px 1.5px,#777 0,#fff 100%)"></div>
<div class="t" style="left:31.8px;top:140.6px;font-size:4.8px;color:#e0e0e0;">cup shad</div>
<div class="a" style="left:0px;top:168.29999999999998px;width:100px;height:0.6px;background:#434343"></div>
<svg class="a" style="left:3px;top:157.1px" width="7" height="5"><path d="M0.5 2.5Q3.5 -0.5 6.5 2.5Q3.5 5.5 0.5 2.5Z" fill="none" stroke="#e8e8e8" stroke-width="0.8"/><circle cx="3.5" cy="2.5" r="1" fill="#e8e8e8"/></svg>
<div class="a" style="left:14.6px;top:156.14999999999998px;width:13.5px;height:7px;background:linear-gradient(172deg,#fff 0 30%,#2f2a20 30% 55%,#fff 62%)"></div>
<div class="t" style="left:31.8px;top:158.4px;font-size:4.8px;color:#e0e0e0;">saucer back</div>
<div class="a" style="left:0px;top:186.2px;width:100px;height:0.6px;background:#434343"></div>
<svg class="a" style="left:3px;top:175.0px" width="7" height="5"><path d="M0.5 2.5Q3.5 -0.5 6.5 2.5Q3.5 5.5 0.5 2.5Z" fill="none" stroke="#e8e8e8" stroke-width="0.8"/><circle cx="3.5" cy="2.5" r="1" fill="#e8e8e8"/></svg>
<div class="a" style="left:14.6px;top:174.04999999999998px;width:13.5px;height:7px;background:radial-gradient(ellipse 5px 1.5px,#888 0,#fff 100%)"></div>
<div class="t" style="left:31.8px;top:176.3px;font-size:4.8px;color:#e0e0e0;">saucer shad</div>
<div class="a" style="left:0px;top:203.89999999999998px;width:100px;height:0.6px;background:#434343"></div>
<svg class="a" style="left:3px;top:192.8px" width="7" height="5"><path d="M0.5 2.5Q3.5 -0.5 6.5 2.5Q3.5 5.5 0.5 2.5Z" fill="none" stroke="#e8e8e8" stroke-width="0.8"/><circle cx="3.5" cy="2.5" r="1" fill="#e8e8e8"/></svg>
<div class="a" style="left:14.8px;top:188.35px;width:9.5px;height:14px;background:linear-gradient(#d8d0c0 0 35%,#c8683a 35%)"></div>
<div class="t" style="left:27.8px;top:194.1px;font-size:4.8px;color:#e0e0e0;">Box</div>
<div class="a" style="left:0px;top:221.79999999999998px;width:100px;height:0.6px;background:#434343"></div>
<svg class="a" style="left:3px;top:210.6px" width="7" height="5"><path d="M0.5 2.5Q3.5 -0.5 6.5 2.5Q3.5 5.5 0.5 2.5Z" fill="none" stroke="#e8e8e8" stroke-width="0.8"/><circle cx="3.5" cy="2.5" r="1" fill="#e8e8e8"/></svg>
<div class="t" style="left:18px;top:208.6px;font-family:'Liberation Serif',serif;font-size:9.5px;color:#eee">T</div>
<div class="t" style="left:30.5px;top:211.9px;font-size:4.45px;color:#e0e0e0;">STEEPED IN HAPPINESS.</div>
<div class="a" style="left:0px;top:239.2px;width:100px;height:0.6px;background:#434343"></div>
<svg class="a" style="left:3px;top:228.3px" width="7" height="5"><path d="M0.5 2.5Q3.5 -0.5 6.5 2.5Q3.5 5.5 0.5 2.5Z" fill="none" stroke="#e8e8e8" stroke-width="0.8"/><circle cx="3.5" cy="2.5" r="1" fill="#e8e8e8"/></svg>
<div class="a" style="left:14.6px;top:224.29999999999998px;width:13px;height:13px;background:linear-gradient(#e3cfb8 0 80%,#8c9659 80%)"></div>
<div class="t" style="left:28.5px;top:229.6px;font-size:4.8px;color:#e0e0e0;">bkgd</div>
<div class="a" style="left:100px;top:51.1px;width:7px;height:189px;background:#494949"></div>
<div class="a" style="left:12.2px;top:51.1px;width:0.5px;height:189px;background:#454545"></div>
<div class="a" style="left:0px;top:426.5px;width:107px;height:0.6px;background:#444"></div>
<svg class="a" style="left:17px;top:428.5px" width="90" height="9"><circle cx="3.2" cy="4.3" r="1.5" stroke="#888" stroke-width="0.7" fill="none"/><circle cx="6.2" cy="4.3" r="1.5" stroke="#888" stroke-width="0.7" fill="none"/><text x="12.5" y="6.5" font-family="Liberation Serif" font-style="italic" font-size="7" fill="#ddd">fx</text><rect x="25.5" y="1.8" width="6" height="5" rx="0.5" fill="#e8e8e8"/><circle cx="28.5" cy="4.3" r="1.4" fill="#4e4e4e"/><circle cx="40" cy="4.3" r="2.7" fill="#ddd"/><path d="M41.9 2.4A2.7 2.7 0 0 1 38.1 6.2Z" fill="#4e4e4e"/><path d="M49 2.2H51.5L52.3 3H55V6.8H49Z" fill="#ddd"/><rect x="61.5" y="1.3" width="5" height="6" rx="0.6" stroke="#ddd" stroke-width="0.7" fill="none"/><path d="M64 2.8V5.6M62.8 4.6L64 5.8L65.2 4.6" stroke="#ddd" stroke-width="0.6" fill="none"/><path d="M72.5 2.2H77.5M73.3 2.2V7.3H76.7V2.2M74.3 1.2H75.7" stroke="#ccc" stroke-width="0.7" fill="none"/></svg></div>
<svg class="a" style="left:8.5px;top:4px" width="7" height="8" viewBox="0 0 7 8"><path d="M3.6 2.2C3.5 1.3 4.2 0.4 5 0.3C5.1 1.2 4.4 2.1 3.6 2.2Z M5.2 2.4C4.5 2.4 4.1 2.8 3.5 2.8C2.9 2.8 2.5 2.4 1.9 2.4C1 2.5 0.2 3.3 0.2 4.7C0.2 6.2 1.2 7.9 2.1 7.9C2.6 7.9 2.9 7.6 3.5 7.6C4.1 7.6 4.3 7.9 4.9 7.9C5.7 7.9 6.3 6.8 6.6 5.9C5.8 5.6 5.4 4.8 5.4 4.1C5.4 3.5 5.7 3 6.2 2.8C5.9 2.5 5.6 2.4 5.2 2.4Z" fill="#111"/></svg>
<div class="a" style="left:639.3px;top:2.9px;width:13.1px;height:9.9px;background:#f0922e;border-radius:2px"></div>
<svg class="a" style="left:643px;top:4.2px" width="6" height="8" viewBox="0 0 6 8"><rect x="1.8" y="0.3" width="2.4" height="4.2" rx="1.2" fill="#fff"/><path d="M0.8 3.3A2.2 2.2 0 0 0 5.2 3.3M3 5.5V7M1.8 7H4.2" stroke="#fff" stroke-width="0.6" fill="none"/></svg>
<svg class="a" style="left:658.8px;top:6.6px" width="8" height="3" viewBox="0 0 8 3"><circle cx="1.2" cy="1.2" r="0.95" fill="#222"/><circle cx="3.9" cy="1.2" r="0.95" fill="#222"/><circle cx="6.6" cy="1.2" r="0.95" fill="#222"/></svg>
<svg class="a" style="left:674.5px;top:4.5px" width="8" height="6" viewBox="0 0 8 6"><path d="M0.3 2.3A5 5 0 0 1 7.7 2.3M1.6 3.6A3.2 3.2 0 0 1 6.4 3.6M2.9 4.9A1.5 1.5 0 0 1 5.1 4.9" stroke="#222" stroke-width="0.9" fill="none"/><circle cx="4" cy="5.6" r="0.5" fill="#222"/></svg>
<div class="t" style="left:690px;top:5.6px;font-size:5.2px;color:#111;">97%</div>
<svg class="a" style="left:702px;top:4.8px" width="11" height="6" viewBox="0 0 11 6"><rect x="0.4" y="0.4" width="9" height="5" rx="1.3" stroke="#333" stroke-width="0.7" fill="none"/><rect x="1.3" y="1.3" width="7.2" height="3.2" rx="0.6" fill="#222"/><rect x="9.8" y="2" width="0.9" height="1.8" fill="#333"/></svg>
<svg class="a" style="left:718.5px;top:4px" width="10" height="8" viewBox="0 0 10 8"><rect x="0.3" y="0.6" width="5.2" height="3" rx="1.5" fill="#222"/><rect x="0.3" y="4.2" width="6.5" height="3.2" rx="1.6" fill="#222"/><circle cx="4" cy="2" r="1" fill="#eee"/><circle cx="2" cy="5.8" r="1" fill="#eee"/><circle cx="9" cy="5.5" r="0.9" fill="#f09030"/></svg>
<svg class="a" style="left:734.5px;top:3px" width="10" height="10" viewBox="0 0 10 10"><circle cx="5" cy="5" r="4.2" stroke="#222" stroke-width="0.8" fill="none"/><path d="M5 5L7 2.5" stroke="#222" stroke-width="0.8"/></svg>
<div class="a" style="left:3px;top:18.2px;width:6.3px;height:6.3px;background:#ee5f56;border-radius:50%"></div>
<div class="a" style="left:11.6px;top:18.2px;width:6.3px;height:6.3px;background:#f4bd3a;border-radius:50%"></div>
<div class="a" style="left:20.2px;top:18.2px;width:6.3px;height:6.3px;background:#5bc547;border-radius:50%"></div>
<div class="t" style="left:343.6px;top:20.2px;font-size:5.95px;color:#e8e8e8;">Adobe Photoshop 2024</div>
<svg class="a" style="left:8.2px;top:30px" width="9" height="8" viewBox="0 0 9 8"><path d="M4.5 0.3L0.3 4H1.5V7.7H3.6V5.4H5.4V7.7H7.5V4H8.7Z" fill="#f0f0f0"/></svg>
<div class="a" style="left:23px;top:28.5px;width:0.6px;height:11px;background:#3c3c3c"></div>
<svg class="a" style="left:25.5px;top:29.5px" width="9" height="9" viewBox="0 0 9 9"><path d="M4.5 0.3V8.7M0.3 4.5H8.7" stroke="#ddd" stroke-width="0.9"/><path d="M3.3 1.5L4.5 0.3L5.7 1.5M3.3 7.5L4.5 8.7L5.7 7.5M1.5 3.3L0.3 4.5L1.5 5.7M7.5 3.3L8.7 4.5L7.5 5.7" stroke="#ddd" stroke-width="0.7" fill="none"/></svg>
<svg class="a" style="left:37.5px;top:32.5px" width="5" height="4" viewBox="0 0 5 4"><path d="M0.5 0.8L2.3 2.6L4.1 0.8" stroke="#bbb" stroke-width="0.8" fill="none"/></svg>
<div class="a" style="left:43.2px;top:28.5px;width:0.6px;height:11px;background:#3c3c3c"></div>
<div class="a" style="left:47px;top:31px;width:5.6px;height:5.6px;border:0.7px solid #8a8a8a;border-radius:50%"></div>
<div class="t" style="left:55.4px;top:33px;font-size:4.9px;color:#b0b0b0;">Auto-Select:</div>
<div class="a" style="left:85.4px;top:30.2px;width:23.2px;height:7px;background:#3e3e3e;border-radius:1px"></div>
<div class="t" style="left:88.5px;top:33px;font-size:4.7px;color:#d0d0d0;">Layer</div>
<svg class="a" style="left:102.5px;top:32.5px" width="5" height="4" viewBox="0 0 5 4"><path d="M0.5 0.8L2.3 2.6L4.1 0.8" stroke="#bbb" stroke-width="0.8" fill="none"/></svg>
<div class="a" style="left:112.2px;top:28.5px;width:0.6px;height:11px;background:#3c3c3c"></div>
<svg class="a" style="left:114.5px;top:30.5px" width="8" height="8" viewBox="0 0 8 8"><g transform="translate(0.6 0.6) scale(0.85)"><path d="M0.5 0.5V7.5" stroke="#8a8a8a" stroke-width="0.7"/><rect x="1.6" y="1.8" width="3.5" height="1.6" fill="#a0a0a0"/><rect x="1.6" y="4.6" width="5.5" height="1.6" fill="#a0a0a0"/></g></svg>
<svg class="a" style="left:126px;top:30px" width="8" height="8" viewBox="0 0 8 8"><g transform="translate(0.6 0.6) scale(0.85)"><path d="M4 0.5V7.5" stroke="#8a8a8a" stroke-width="0.7"/><rect x="2" y="1.8" width="4" height="1.6" fill="#a0a0a0"/><rect x="1" y="4.6" width="6" height="1.6" fill="#a0a0a0"/></g></svg>
<svg class="a" style="left:137.5px;top:30px" width="8" height="8" viewBox="0 0 8 8"><g transform="translate(0.6 0.6) scale(0.85)"><path d="M7.5 0.5V7.5" stroke="#8a8a8a" stroke-width="0.7"/><rect x="3" y="1.8" width="3.5" height="1.6" fill="#a0a0a0"/><rect x="1" y="4.6" width="5.5" height="1.6" fill="#a0a0a0"/></g></svg>
<svg class="a" style="left:149.5px;top:30px" width="9" height="8" viewBox="0 0 9 8"><g transform="translate(0.6 0.6) scale(0.85)"><path d="M0.5 1.5H8.5M0.5 6.5H8.5" stroke="#8a8a8a" stroke-width="0.7"/><rect x="2" y="3" width="5" height="2" fill="#a0a0a0"/></g></svg>
<div class="a" style="left:160.4px;top:28.5px;width:0.6px;height:11px;background:#3c3c3c"></div>
<svg class="a" style="left:165px;top:30px" width="8" height="8" viewBox="0 0 8 8"><g transform="translate(0.6 0.6) scale(0.85)"><path d="M0.5 0.5H7.5" stroke="#8a8a8a" stroke-width="0.7"/><rect x="1.8" y="1.6" width="1.6" height="5" fill="#a0a0a0"/><rect x="4.6" y="1.6" width="1.6" height="3.5" fill="#a0a0a0"/></g></svg>
<svg class="a" style="left:176px;top:30px" width="8" height="8" viewBox="0 0 8 8"><g transform="translate(0.6 0.6) scale(0.85)"><path d="M0.5 4H7.5" stroke="#8a8a8a" stroke-width="0.7"/><rect x="1.8" y="1.5" width="1.6" height="5" fill="#a0a0a0"/><rect x="4.6" y="2.3" width="1.6" height="3.4" fill="#a0a0a0"/></g></svg>
<svg class="a" style="left:188px;top:30px" width="8" height="8" viewBox="0 0 8 8"><g transform="translate(0.6 0.6) scale(0.85)"><path d="M0.5 7.5H7.5" stroke="#8a8a8a" stroke-width="0.7"/><rect x="1.8" y="1.5" width="1.6" height="5" fill="#a0a0a0"/><rect x="4.6" y="3" width="1.6" height="3.5" fill="#a0a0a0"/></g></svg>
<svg class="a" style="left:200px;top:29.5px" width="8" height="9" viewBox="0 0 8 9"><g transform="translate(0.6 0.6) scale(0.85)"><path d="M1.5 0.5V8.5M6.5 0.5V8.5" stroke="#8a8a8a" stroke-width="0.7"/><rect x="3" y="2" width="2" height="5" fill="#a0a0a0"/></g></svg>
<div class="a" style="left:210.8px;top:28.5px;width:0.6px;height:11px;background:#3c3c3c"></div>
<svg class="a" style="left:215.5px;top:32.7px" width="8" height="3" viewBox="0 0 8 3"><circle cx="1.2" cy="1.2" r="0.9" fill="#ddd"/><circle cx="3.9" cy="1.2" r="0.9" fill="#ddd"/><circle cx="6.6" cy="1.2" r="0.9" fill="#ddd"/></svg>
<div class="a" style="left:227px;top:28.5px;width:0.6px;height:11px;background:#3c3c3c"></div>
<svg class="a" style="left:232px;top:29.8px" width="9" height="9" viewBox="0 0 9 9"><circle cx="4" cy="4" r="2.5" fill="#eee"/><circle cx="4" cy="4" r="2.9" stroke="#eee" stroke-width="0.9" fill="none" stroke-dasharray="1.1 1.2"/><circle cx="4" cy="4" r="0.9" fill="#4a4a4a"/><circle cx="7.6" cy="7.6" r="0.5" fill="#ccc"/></svg>
<div class="a" style="left:678px;top:28.5px;width:23.5px;height:10px;background:#3b74e0;border-radius:5px"></div>
<div class="t" style="left:683.8px;top:32px;font-size:4.9px;color:#fff;font-weight:bold">Share</div>
<svg class="a" style="left:705px;top:29.5px" width="9" height="9" viewBox="0 0 9 9"><circle cx="3.8" cy="3.8" r="2.8" stroke="#e8e8e8" stroke-width="0.9" fill="none"/><path d="M5.8 5.8L8.3 8.3" stroke="#e8e8e8" stroke-width="1"/></svg>
<svg class="a" style="left:718.5px;top:28.7px" width="10" height="10" viewBox="0 0 10 10"><circle cx="5" cy="5" r="4.2" stroke="#e8e8e8" stroke-width="0.9" fill="none"/><text x="3.3" y="7.2" font-family="Liberation Sans" font-weight="bold" font-size="6" fill="#e8e8e8">?</text></svg>
<svg class="a" style="left:732px;top:29.5px" width="9" height="8" viewBox="0 0 9 8"><rect x="0.5" y="0.8" width="7.5" height="6.4" stroke="#ddd" stroke-width="0.8" fill="none"/><rect x="0.5" y="0.8" width="2.3" height="6.4" fill="#ddd"/></svg>
<svg class="a" style="left:743.5px;top:32px" width="5" height="4" viewBox="0 0 5 4"><path d="M0.5 0.8L2.3 2.6L4.1 0.8" stroke="#aaa" stroke-width="0.8" fill="none"/></svg>
<svg class="a" style="left:634.5px;top:41.5px" width="6" height="3.5" viewBox="0 0 6 3.5"><path d="M0.5 0.5L1.8 1.7L0.5 2.9M3 0.5L4.3 1.7L3 2.9" stroke="#888" stroke-width="0.6" fill="none"/></svg>
<svg class="a" style="left:741.5px;top:41.5px" width="6" height="3.5" viewBox="0 0 6 3.5"><path d="M0.5 0.5L1.8 1.7L0.5 2.9M3 0.5L4.3 1.7L3 2.9" stroke="#888" stroke-width="0.6" fill="none"/></svg>
<svg class="a" style="left:4px;top:42.7px" width="6" height="3.5" viewBox="0 0 6 3.5"><path d="M0.5 0.5L1.8 1.7L0.5 2.9M3 0.5L4.3 1.7L3 2.9" stroke="#888" stroke-width="0.6" fill="none"/></svg>
<div class="t" style="left:22.5px;top:44.5px;font-size:4px;color:#999;">&#215;</div>
<div class="t" style="left:28.3px;top:45.2px;font-size:5.2px;color:#f0f0f0;font-weight:bold">Steeped in Happiness.psd @ 177% (Radiant Citrus, RGB/8#) *</div>
<div class="a" style="left:17.5px;top:477.8px;width:25.5px;height:7.2px;background:#2d2d2d"></div>
<div class="t" style="left:20.8px;top:479.8px;font-size:5.3px;color:#e8e8e8;">177.04%</div>
<div class="a" style="left:43px;top:477.8px;width:428.5px;height:7.2px;background:#474747"></div>
<div class="t" style="left:52.8px;top:480.3px;font-size:4.7px;color:#d8d8d8;">1080 px x 1080 px (72 ppi)</div>
<svg class="a" style="left:118.5px;top:479px" width="4" height="6" viewBox="0 0 4 6"><path d="M0.8 0.8L2.8 2.8L0.8 4.8" stroke="#ccc" stroke-width="0.7" fill="none"/></svg>
<div class="a" style="left:235px;top:479.3px;width:127px;height:4.8px;background:#5c5c5c;border-radius:2.4px"></div>
<div class="a" style="left:17px;top:41px;width:0.8px;height:444px;background:#3a3a3a"></div>
<div class="a" style="left:1.5px;top:45.5px;width:14px;height:0.6px;background:#3d3d3d"></div>
<div class="a" style="left:3px;top:48px;width:11px;height:0.5px;background:repeating-linear-gradient(90deg,#777 0 1px,transparent 1px 2px)"></div>
<div class="a" style="left:2.5px;top:54px;width:12.3px;height:9.3px;background:#333;border-radius:1px"></div>
<svg class="a" style="left:4px;top:53.3px" width="9" height="9" viewBox="0 0 9 9"><path d="M4.5 0.5V8.5M0.5 4.5H8.5" stroke="#d8d8d8" stroke-width="0.9"/><path d="M3.3 1.7L4.5 0.5L5.7 1.7M3.3 7.3L4.5 8.5L5.7 7.3M1.7 3.3L0.5 4.5L1.7 5.7M7.3 3.3L8.5 4.5L7.3 5.7" stroke="#d8d8d8" stroke-width="0.7" fill="none"/></svg>
<div class="a" style="left:13.6px;top:61.0px;width:0.8px;height:0.8px;background:#bbb"></div>
<svg class="a" style="left:4px;top:65.0px" width="9" height="9" viewBox="0 0 9 9"><rect x="1" y="1.5" width="7" height="6" stroke="#d8d8d8" stroke-width="0.8" fill="none" stroke-dasharray="1.2 0.8"/></svg>
<div class="a" style="left:13.6px;top:72.7px;width:0.8px;height:0.8px;background:#bbb"></div>
<svg class="a" style="left:4px;top:76.3px" width="9" height="9" viewBox="0 0 9 9"><ellipse cx="4.5" cy="3.8" rx="3.6" ry="2.6" stroke="#d8d8d8" stroke-width="0.9" fill="none"/><path d="M2 6L2.5 8" stroke="#d8d8d8" stroke-width="0.7"/></svg>
<div class="a" style="left:13.6px;top:84.0px;width:0.8px;height:0.8px;background:#bbb"></div>
<svg class="a" style="left:4px;top:87.7px" width="9" height="9" viewBox="0 0 9 9"><path d="M1.5 1.5L4 2.5L3 4Z" fill="#d8d8d8"/><path d="M4 4L8 8M5 7.5L8 8L7.5 5" stroke="#d8d8d8" stroke-width="0.9" fill="none"/><rect x="1" y="1" width="3" height="3" rx="1" stroke="#d8d8d8" stroke-width="0.6" fill="none"/></svg>
<div class="a" style="left:13.6px;top:95.4px;width:0.8px;height:0.8px;background:#bbb"></div>
<svg class="a" style="left:4px;top:99.1px" width="9" height="9" viewBox="0 0 9 9"><path d="M2.5 0.5V6.5H8.5M0.5 2.5H6.5V8.5" stroke="#d8d8d8" stroke-width="1.1" fill="none"/></svg>
<div class="a" style="left:13.6px;top:106.8px;width:0.8px;height:0.8px;background:#bbb"></div>
<svg class="a" style="left:4px;top:110.3px" width="9" height="9" viewBox="0 0 9 9"><rect x="1" y="1" width="7" height="7" stroke="#d8d8d8" stroke-width="0.8" fill="none"/><path d="M1 1L8 8M8 1L1 8" stroke="#d8d8d8" stroke-width="0.7"/></svg>
<div class="a" style="left:13.6px;top:118.0px;width:0.8px;height:0.8px;background:#bbb"></div>
<svg class="a" style="left:4px;top:121.7px" width="9" height="9" viewBox="0 0 9 9"><path d="M1 8L5.5 3.5M4.5 2.5L6.5 0.8L8.2 2.5L6.5 4.5Z" stroke="#d8d8d8" stroke-width="1" fill="#d8d8d8"/></svg>
<div class="a" style="left:13.6px;top:129.4px;width:0.8px;height:0.8px;background:#bbb"></div>
<svg class="a" style="left:4px;top:133.1px" width="9" height="9" viewBox="0 0 9 9"><rect x="1.5" y="3" width="6" height="3" rx="1.5" transform="rotate(-45 4.5 4.5)" stroke="#d8d8d8" stroke-width="0.9" fill="#d8d8d8"/></svg>
<div class="a" style="left:13.6px;top:140.8px;width:0.8px;height:0.8px;background:#bbb"></div>
<svg class="a" style="left:4px;top:144.4px" width="9" height="9" viewBox="0 0 9 9"><path d="M1 8L2.5 5.5L7.5 0.8L8.2 1.5L3.5 6.5Z" fill="#d8d8d8"/></svg>
<div class="a" style="left:13.6px;top:152.1px;width:0.8px;height:0.8px;background:#bbb"></div>
<svg class="a" style="left:4px;top:155.6px" width="9" height="9" viewBox="0 0 9 9"><path d="M3 0.8H6L5.3 3.5H7.5V5.2H1.5V3.5H3.7Z" fill="#d8d8d8"/><rect x="1" y="6.2" width="7" height="1.6" fill="#d8d8d8"/></svg>
<div class="a" style="left:13.6px;top:163.3px;width:0.8px;height:0.8px;background:#bbb"></div>
<svg class="a" style="left:4px;top:166.8px" width="9" height="9" viewBox="0 0 9 9"><path d="M1 8L6.5 2.5M5 1L8 4" stroke="#d8d8d8" stroke-width="1.1" fill="none"/><path d="M0.8 3L2.5 1" stroke="#d8d8d8" stroke-width="0.7"/></svg>
<div class="a" style="left:13.6px;top:174.5px;width:0.8px;height:0.8px;background:#bbb"></div>
<svg class="a" style="left:4px;top:178.0px" width="9" height="9" viewBox="0 0 9 9"><path d="M1 6L5 1.5L8 4.2L4.5 8H2Z" fill="#d8d8d8"/><path d="M2.8 4L5.8 7" stroke="#494949" stroke-width="0.8"/></svg>
<div class="a" style="left:13.6px;top:185.7px;width:0.8px;height:0.8px;background:#bbb"></div>
<svg class="a" style="left:4px;top:189.2px" width="9" height="9" viewBox="0 0 9 9"><rect x="1" y="1.5" width="7" height="6" fill="#d8d8d8"/><rect x="1" y="1.5" width="3.5" height="6" fill="#888"/></svg>
<div class="a" style="left:13.6px;top:196.9px;width:0.8px;height:0.8px;background:#bbb"></div>
<svg class="a" style="left:4px;top:200.4px" width="9" height="9" viewBox="0 0 9 9"><path d="M4.5 0.8C3 3.5 2 4.8 2 6A2.5 2.5 0 0 0 7 6C7 4.8 6 3.5 4.5 0.8Z" fill="#d8d8d8"/></svg>
<div class="a" style="left:13.6px;top:208.1px;width:0.8px;height:0.8px;background:#bbb"></div>
<svg class="a" style="left:4px;top:211.6px" width="9" height="9" viewBox="0 0 9 9"><circle cx="4.2" cy="3.6" r="2.6" fill="#d8d8d8"/><path d="M4.2 6V8.5" stroke="#d8d8d8" stroke-width="1.2"/></svg>
<div class="a" style="left:13.6px;top:219.3px;width:0.8px;height:0.8px;background:#bbb"></div>
<svg class="a" style="left:4px;top:222.8px" width="9" height="9" viewBox="0 0 9 9"><path d="M1 8L2 4.5L5.5 1L8 3.5L4.5 7Z" stroke="#d8d8d8" stroke-width="0.9" fill="none"/><circle cx="4.2" cy="4.8" r="0.7" fill="#d8d8d8"/></svg>
<div class="a" style="left:13.6px;top:230.5px;width:0.8px;height:0.8px;background:#bbb"></div>
<svg class="a" style="left:4px;top:234.0px" width="9" height="9" viewBox="0 0 9 9"><path d="M1 1H8V2.6M4.5 1V8M3 8H6M1 1V2.6" stroke="#d8d8d8" stroke-width="1.1" fill="none"/></svg>
<div class="a" style="left:13.6px;top:241.7px;width:0.8px;height:0.8px;background:#bbb"></div>
<svg class="a" style="left:4px;top:245.2px" width="9" height="9" viewBox="0 0 9 9"><path d="M2 0.8L7.5 5.5H4.8L6 8.2L4.8 8.6L3.6 6L2 7.8Z" fill="#d8d8d8"/></svg>
<div class="a" style="left:13.6px;top:252.9px;width:0.8px;height:0.8px;background:#bbb"></div>
<svg class="a" style="left:4px;top:256.4px" width="9" height="9" viewBox="0 0 9 9"><ellipse cx="4.5" cy="4.5" rx="3.6" ry="3.2" fill="#888"/></svg>
<div class="a" style="left:13.6px;top:264.1px;width:0.8px;height:0.8px;background:#bbb"></div>
<svg class="a" style="left:4px;top:267.6px" width="9" height="9" viewBox="0 0 9 9"><path d="M2 5V3C2 2.3 3 2.3 3 3V1.8C3 1 4 1 4 1.8V1.5C4 0.8 5 0.8 5 1.5V2C5 1.4 6 1.4 6 2V5.5C6 7.5 5 8.3 3.8 8.3C2.5 8.3 1.5 7.3 1 6L0.5 4.5C0.3 3.8 1.2 3.5 1.5 4.2Z" fill="#d8d8d8"/></svg>
<div class="a" style="left:13.6px;top:275.3px;width:0.8px;height:0.8px;background:#bbb"></div>
<svg class="a" style="left:4px;top:279.4px" width="9" height="9" viewBox="0 0 9 9"><circle cx="3.8" cy="3.8" r="2.8" stroke="#d8d8d8" stroke-width="1" fill="none"/><path d="M5.8 5.8L8.3 8.3" stroke="#d8d8d8" stroke-width="1.2"/></svg>
<div class="a" style="left:13.6px;top:287.1px;width:0.8px;height:0.8px;background:#bbb"></div>
<svg class="a" style="left:4px;top:291.3px" width="9" height="9" viewBox="0 0 9 9"><circle cx="1.3" cy="4.5" r="0.9" fill="#d8d8d8"/><circle cx="4.5" cy="4.5" r="0.9" fill="#d8d8d8"/><circle cx="7.7" cy="4.5" r="0.9" fill="#d8d8d8"/></svg>
<div class="a" style="left:13.6px;top:299.0px;width:0.8px;height:0.8px;background:#bbb"></div>
<svg class="a" style="left:2.5px;top:303px" width="5" height="5" viewBox="0 0 5 5"><circle cx="2.2" cy="2.2" r="1.8" fill="#111" stroke="#ddd" stroke-width="0.5"/></svg>
<svg class="a" style="left:10px;top:302.5px" width="5" height="5" viewBox="0 0 5 5"><path d="M1 4V1.5H4M3 0.5L4 1.5L3 2.5" stroke="#ddd" stroke-width="0.6" fill="none"/></svg>
<div class="a" style="left:6px;top:315.8px;width:9px;height:8.3px;background:#fff;border:0.6px solid #333"></div>
<div class="a" style="left:2.2px;top:311.3px;width:7.8px;height:7.8px;background:#e0d2c0;border:0.6px solid #444"></div>
<svg class="a" style="left:4px;top:327.5px" width="9" height="8" viewBox="0 0 9 8"><rect x="0.5" y="0.5" width="8" height="7" rx="1" stroke="#ccc" stroke-width="0.7" fill="none"/><circle cx="4.5" cy="4" r="2" stroke="#ccc" stroke-width="0.7" fill="none"/></svg>
<svg class="a" style="left:4px;top:338.5px" width="10" height="8" viewBox="0 0 10 8"><rect x="0.5" y="2.5" width="6.5" height="5" stroke="#ccc" stroke-width="0.7" fill="none"/><path d="M2 2.5V0.8H8.5V5.5H7" stroke="#ccc" stroke-width="0.7" fill="none"/></svg>
</body></html>
